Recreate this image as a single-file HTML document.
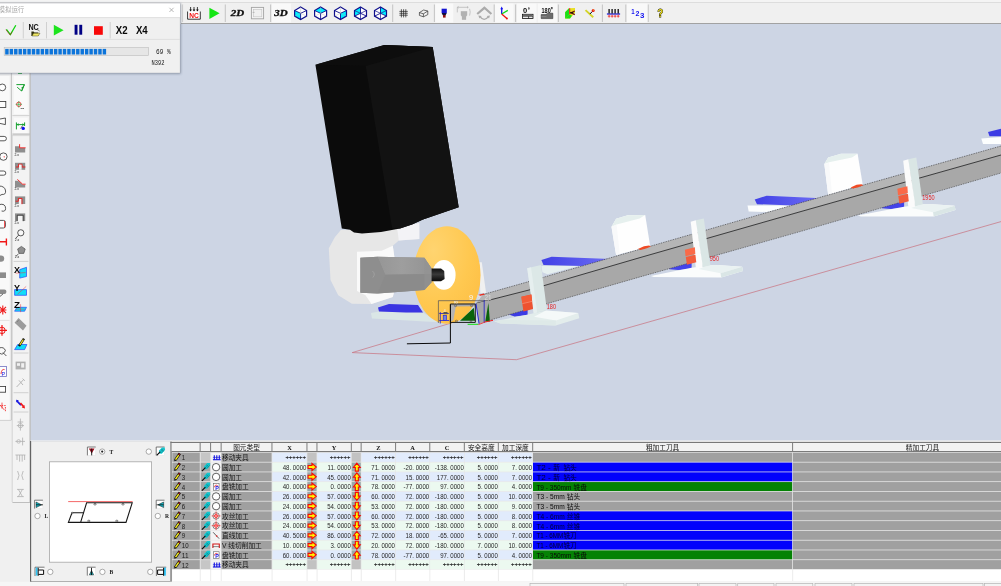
<!DOCTYPE html>
<html lang="zh"><head><meta charset="utf-8"><title>模拟运行</title>
<style>html,body{margin:0;padding:0;background:#F0F0F0;overflow:hidden}svg{display:block;will-change:transform}text{white-space:pre}</style></head>
<body><svg width="1001" height="586" viewBox="0 0 1001 586">
<defs>
<linearGradient id="gblue" x1="0" y1="0" x2="1" y2="0"><stop offset="0" stop-color="#4040E6"/><stop offset="1" stop-color="#6E6EF4"/></linearGradient>
<radialGradient id="gdisc" cx="0.3" cy="0.25" r="0.9"><stop offset="0" stop-color="#FFD470"/><stop offset="0.6" stop-color="#FFC850"/><stop offset="1" stop-color="#FDBE44"/></radialGradient>
<linearGradient id="gcyl" x1="0" y1="0" x2="0" y2="1"><stop offset="0" stop-color="#101010"/><stop offset="0.45" stop-color="#3A3A3A"/><stop offset="1" stop-color="#0A0A0A"/></linearGradient>
<linearGradient id="gsp1" x1="0" y1="0" x2="1" y2="0"><stop offset="0" stop-color="#969696"/><stop offset="0.45" stop-color="#9E9E9E"/><stop offset="1" stop-color="#939393"/></linearGradient>
<filter id="fsh" x="-5%" y="-10%" width="110%" height="125%"><feGaussianBlur stdDeviation="1"/></filter>
</defs>
<rect x="30" y="24" width="971" height="417" fill="#CDD5E4"/>
<polyline points="452,322.8 352.2,352.6 516.5,359.7 1001,221.6" fill="none" stroke="#C8707C" stroke-width="0.7"/>
<polygon points="541.4,266 578.3,266 547.6,274.2 542.4,272.2" fill="#E6F0F0"/>
<polygon points="541.4,260 551.6,256.8 611,258.9 582.4,266 543.5,265" fill="url(#gblue)"/>
<polygon points="747.5,205.4 793,205.4 766.6,212 748.7,211.4" fill="#FCFEFE"/>
<polygon points="754.7,199.4 766.6,195.8 821.6,198.2 793,205.4 757,204.2" fill="url(#gblue)"/>
<polygon points="981.3,138.4 1001,137 1001,144 983,144" fill="#FCFEFE"/>
<polygon points="988,132 1001,128.7 1001,136.2 989.5,136.2" fill="#3C3CE4"/>
<polygon points="479.2,262.3 481.8,262.3 486.1,293 480.3,293" fill="#F0F0F0"/>
<polygon points="611.5,226.8 616.1,218.8 627.7,215.2 645.2,214.9 650.2,246.4 616.1,255.1" fill="#FEFEFE"/>
<polygon points="611.5,226.8 616.1,218.8 627.7,215.2 645.2,214.9 639.6,218.6 616.6,224.6" fill="#E6F0EE"/>
<polygon points="611.5,226.8 616.6,224.6 619.8,254.2 616.1,255.1" fill="#F8F9FA"/>
<polygon points="824.3,164 828.2,157.6 841,153.8 857.6,153.8 862.7,184.5 828.2,194.7" fill="#FEFEFE"/>
<polygon points="824.3,164 828.2,157.6 841,153.8 857.6,153.8 852,157.4 829,162.2" fill="#E6F0EE"/>
<polygon points="824.3,164 829,163 832,193.6 828.2,194.7" fill="#F8F9FA"/>
<polygon points="506,313.6 527.6,307.5 527.6,315.1 514.6,316.4" fill="#3C3CE4"/>
<polygon points="667.7,266.3 691.6,259.7 691.6,269 678.1,270.1 669.3,269.2" fill="#4444EA"/>
<polygon points="880.2,205.3 904.1,198.7 904.1,208 890.6,209.1 881.8,208.2" fill="#4444EA"/>
<polygon points="483,294.5 529,281.5 640,249.2 800,203 1001,146 1001,155 800,211.8 640,257.6 529,290 476,303.5" fill="#B5B5B5"/>
<polygon points="476,303.5 529,290 640,257.6 800,211.8 1001,155 1001,173 800,231.6 640,276.9 490.7,319.9 479,323.6" fill="#A8A8A8"/>
<polyline points="476,303.5 529,290 640,257.6 800,211.8 1001,155" fill="none" stroke="#1C1C1C" stroke-width="0.8"/>
<polyline points="483,294.5 529,281.5 640,249.2 800,203 1001,146" fill="none" stroke="#303030" stroke-width="0.7" stroke-dasharray="0.9 0.9"/>
<polyline points="490.7,319.9 640,276.9 800,231.6 1001,173" fill="none" stroke="#404040" stroke-width="0.7" stroke-dasharray="0.9 0.9"/>
<polygon points="637.9,248.9 644,246.2 649,245.5 651,246.5 646,248.6 640.6,250" fill="#F04A24"/>
<polygon points="850.6,187.4 856.6,184.8 861.4,184.2 863.2,185.2 858.4,187.2 853,188.6" fill="#F04A24"/>
<polygon points="478.4,294.8 483.7,293.4 485,294.4 479.5,296" fill="#E83020"/>
<polygon points="494.1,321.3 528,314.6 546,310.4 578.3,313 579.3,318.3 555.7,325.4 500.5,323.4" fill="#E3EDEC"/>
<polygon points="534,316.8 546,310.6 578.3,313 556,320.4" fill="#F5F9F9"/>
<polygon points="494.1,321.3 500.7,320 556,320.4 555.7,325.4 500.5,323.4" fill="#DEE9E8"/>
<polygon points="527.2,268.2 541,265.1 546.9,310 533.7,313.4" fill="#DCE8E7"/>
<polygon points="527.2,268.2 531,267.3 537.2,312.5 533.7,313.4" fill="#E6EFEF"/>
<polygon points="521.4,296.8 531.4,294.5 533,309.1 523.4,311.4" fill="#EE5230"/>
<polygon points="521.4,296.8 531.4,294.5 532.1,301.3 522.2,303.6" fill="#F45C38"/>
<polyline points="522.2,303.7 532.1,301.4" fill="none" stroke="#F6A088" stroke-width="0.6"/>
<text x="546.7" y="308.5" font-family="'Liberation Sans','Noto Sans CJK SC',sans-serif" font-size="6.4" fill="#E42424" textLength="9.3" lengthAdjust="spacingAndGlyphs">180</text>
<polygon points="650.8,276.1 691.4,267.7 710.3,265.2 720.5,265.2 742.2,266.7 743,271 721.2,277.6 653.7,277.1" fill="#FAFCFC"/>
<polygon points="698.7,269.1 710.3,265 720.5,265.2 742.2,266.7 720.5,273.2" fill="#EAF2F2"/>
<polygon points="720.5,273.2 742.2,266.7 743,271 721.2,277.6" fill="#DAE6E6"/>
<polygon points="695.8,220.2 703.8,218.4 710.3,265.2 702.3,267.6" fill="#DAE6E5"/>
<polygon points="690.7,221.7 695.8,220.2 702.3,263 702.3,267.6 701,268 695.8,267.4" fill="#FBFBFB"/>
<polygon points="684.9,249.7 694.9,247.3 695.3,253.9 685.5,256.2" fill="#FA6A48"/>
<polygon points="685.8,256.9 695.4,254.7 696.3,262.3 686.9,264.7" fill="#F25C3C"/>
<text x="709.7" y="261.3" font-family="'Liberation Sans','Noto Sans CJK SC',sans-serif" font-size="6.4" fill="#E42424" textLength="9.3" lengthAdjust="spacingAndGlyphs">950</text>
<polygon points="857.9,215.4 903.9,206.7 922.8,204.2 933,204.2 954.7,205.7 955.5,210 933.7,216.6 860.8,216.4" fill="#FAFCFC"/>
<polygon points="911.2,208.1 922.8,204 933,204.2 954.7,205.7 933,212.2" fill="#EAF2F2"/>
<polygon points="933,212.2 954.7,205.7 955.5,210 933.7,216.6" fill="#DAE6E6"/>
<polygon points="908.3,159.2 916.3,157.4 922.8,204.2 914.8,206.6" fill="#DAE6E5"/>
<polygon points="903.2,160.7 908.3,159.2 914.8,202 914.8,206.6 913.5,207 908.3,206.4" fill="#FBFBFB"/>
<polygon points="897.4,188.7 907.4,186.3 907.8,192.9 898,195.2" fill="#FA6A48"/>
<polygon points="898.3,195.9 907.9,193.7 908.8,201.3 899.4,203.7" fill="#F25C3C"/>
<text x="922.2" y="200.3" font-family="'Liberation Sans','Noto Sans CJK SC',sans-serif" font-size="6.4" fill="#E42424" textLength="12.4" lengthAdjust="spacingAndGlyphs">1950</text>
<polygon points="371,313 379,311.5 406,312.5 423,312.5 438,322 425,321.5 372,318.5" fill="#DAE6E6"/>
<polygon points="378,307.5 389,304 418,305 423,312.5 406,312.5 379,311.5" fill="#3A34E2"/>
<polygon points="328.8,248.3 334.8,237.2 340.8,230 397.1,228 419.3,223 419.3,238.9 398.8,240.6 392.8,245.7 394.5,257.7 393.7,293.5 392.8,296.9 371.5,304.1 351.9,303.8 338.2,295.2 330.5,279.9" fill="#E7E7E7"/>
<polygon points="357,251.7 381.7,250.8 392.8,245.7 394.5,257.7 393.7,293.5 392.8,296.9 371.5,304.1 365.5,295.2 357,291" fill="#FAFAFA"/>
<polygon points="397.1,228 419.3,223 419.3,238.9 398.8,240.6" fill="#F3F3F6"/>
<polygon points="315.4,64.8 384.3,45.1 432.7,46.9 458.7,207.3 423,219.6 412,224.6 400,228.6 381,232 362,233.5 354,232.5 350,229.7 341.8,228.6" fill="#0B0B0B"/>
<polygon points="365.6,65.9 384.3,45.1 432.7,46.9 458.7,207.3 423,219.6 412,224.6 400,228.6 392,227.8" fill="#121212"/>
<polygon points="315.4,64.8 384.3,45.1 432.7,46.9 365.6,65.9" fill="#0D0D0D"/>
<ellipse cx="447" cy="275" rx="33.6" ry="48.8" fill="url(#gdisc)"/>
<ellipse cx="443.9" cy="274.9" rx="11.7" ry="14.9" fill="#FFFFFF"/>
<polygon points="430,268.6 441,268.6 444.2,271 444.6,279 441,281.2 430,281.2" fill="url(#gcyl)"/>
<polygon points="360.4,257.7 377.5,256.8 424.4,257.7 431.3,268 431.3,282.4 424.4,290.1 377.5,293.5 360.4,292.7" fill="#8E8E8E"/>
<polygon points="377.5,256.8 424.4,257.7 431.3,268 431.3,274 385.2,274.7" fill="url(#gsp1)"/>
<polygon points="385.2,274.7 431.3,274 431.3,282.4 424.4,290.1 377.5,293.5" fill="#8B8B8B"/>
<polygon points="424.4,257.7 431.3,268 431.3,282.4 424.4,290.1" fill="#929292" opacity="0.6"/>
<polygon points="360.4,257.7 377.5,256.8 385.2,274.7 377.5,293.5 360.4,292.7" fill="#8E8E8E"/>
<path d="M372.4,271 Q376,274 372.8,277.6" fill="none" stroke="#A6A6A6" stroke-width="0.7"/>
<polygon points="450.4,304 476,303.5 476.3,306.2 450.4,306.4" fill="#A8A8A8"/>
<polygon points="476,303.5 489,300 490.7,319.9 479,323.6" fill="#A8A8A8"/>
<polygon points="460,320.7 473.8,307.7 475.3,320.7" fill="#0A640A"/>
<polygon points="485.3,321.5 488.4,303 489.9,321.5" fill="#0A640A"/>
<polyline points="438.4,323 438.4,300.7 485.3,300.7" fill="none" stroke="#505058" stroke-width="0.7"/>
<polygon points="450.4,304 475.3,304 475.3,322.4 450.4,322.4" fill="none" stroke="#1A1A1A" stroke-width="1"/>
<polygon points="451,305.5 456,305.5 453.4,320 451,321.4" fill="#B4B4B4"/>
<polyline points="476,303.8 479.1,323.8" fill="none" stroke="#1818E0" stroke-width="0.9"/>
<line x1="484.2" y1="300" x2="484.2" y2="323" stroke="#1818C8" stroke-width="0.8"/>
<polyline points="439.2,313.5 448.8,313.5" fill="none" stroke="#2020D0" stroke-width="0.8"/>
<polyline points="439.2,320.5 449.2,320.5" fill="none" stroke="#2020D0" stroke-width="0.8"/>
<rect x="443.2" y="315.3" width="3.4" height="5" fill="#7080E0" stroke="#2020D0" stroke-width="0.6"/>
<line x1="440.3" y1="312" x2="440.3" y2="323.5" stroke="#2020D0" stroke-width="0.8"/>
<polygon points="443.5,312 447.5,312 447.5,314.2 443.5,314.2" fill="#555"/>
<line x1="467.6" y1="324.3" x2="478.4" y2="324.3" stroke="#10E010" stroke-width="1"/>
<polyline points="483.7,322.3 493,320.3" fill="none" stroke="#F02020" stroke-width="1"/>
<polyline points="478.4,324.6 483.7,322.6" fill="none" stroke="#F03030" stroke-width="0.9"/>
<ellipse cx="455.5" cy="305.8" rx="1.2" ry="0.8" fill="none" stroke="#444" stroke-width="0.5"/>
<ellipse cx="471.6" cy="305.8" rx="1.2" ry="0.8" fill="none" stroke="#444" stroke-width="0.5"/>
<ellipse cx="456.5" cy="321" rx="1.2" ry="0.8" fill="none" stroke="#444" stroke-width="0.5"/>
<ellipse cx="471" cy="321" rx="1.2" ry="0.8" fill="none" stroke="#444" stroke-width="0.5"/>
<text x="468.9" y="300" font-family="'Liberation Sans','Noto Sans CJK SC',sans-serif" font-size="7.4" fill="#F6F6F6">9</text>
<text x="454" y="303" font-family="'Liberation Sans','Noto Sans CJK SC',sans-serif" font-size="4.6" fill="#EEEEEE" transform="rotate(-90 456 301.5)">8</text>
<text x="477.2" y="299.4" font-family="'Liberation Sans','Noto Sans CJK SC',sans-serif" font-size="5" fill="#E8E8E8">8</text>
<text x="484.5" y="299.5" font-family="'Liberation Sans','Noto Sans CJK SC',sans-serif" font-size="6.4" fill="#DCDCDC">21</text>
<text x="443.4" y="311.6" font-family="'Liberation Sans','Noto Sans CJK SC',sans-serif" font-size="4" fill="#F0F0F0">4</text>
<polyline points="406.9,343.8 450.4,343 450.4,304.6" fill="none" stroke="#0A0A0A" stroke-width="1"/>
<rect x="0" y="0" width="1001" height="3" fill="#F4F4F4"/>
<rect x="0" y="2.2" width="1001" height="0.8" fill="#D8D8D8"/>
<rect x="181" y="3" width="820" height="20.2" fill="#F0F0F0"/>
<rect x="181" y="23" width="820" height="1" fill="#A2A2A2"/>
<line x1="182.6" y1="4.5" x2="182.6" y2="22" stroke="#C4C4C4" stroke-width="0.8"/>
<line x1="225.3" y1="4.5" x2="225.3" y2="22" stroke="#C0C0C0" stroke-width="0.9"/>
<line x1="270.6" y1="4.5" x2="270.6" y2="22" stroke="#C0C0C0" stroke-width="0.9"/>
<line x1="392.7" y1="4.5" x2="392.7" y2="22" stroke="#C0C0C0" stroke-width="0.9"/>
<line x1="434.4" y1="4.5" x2="434.4" y2="22" stroke="#C0C0C0" stroke-width="0.9"/>
<line x1="494.2" y1="4.5" x2="494.2" y2="22" stroke="#C0C0C0" stroke-width="0.9"/>
<line x1="515.6" y1="4.5" x2="515.6" y2="22" stroke="#C0C0C0" stroke-width="0.9"/>
<line x1="558.4" y1="4.5" x2="558.4" y2="22" stroke="#C0C0C0" stroke-width="0.9"/>
<line x1="602.4" y1="4.5" x2="602.4" y2="22" stroke="#C0C0C0" stroke-width="0.9"/>
<line x1="625.8" y1="4.5" x2="625.8" y2="22" stroke="#C0C0C0" stroke-width="0.9"/>
<line x1="648.2" y1="4.5" x2="648.2" y2="22" stroke="#C0C0C0" stroke-width="0.9"/>
<rect x="272" y="3.6" width="19" height="19" fill="#F9F9F9"/>
<rect x="435.2" y="3.6" width="18" height="19" fill="#F9F9F9"/>
<rect x="495" y="3.6" width="18.6" height="19" fill="#F9F9F9"/>
<rect x="517" y="3.6" width="19.6" height="19" fill="#F9F9F9"/>
<rect x="537.8" y="3.6" width="19.2" height="19" fill="#F9F9F9"/>
<rect x="627" y="3.6" width="20.4" height="19" fill="#F9F9F9"/>
<rect x="187.6" y="11.3" width="12.6" height="7.6" fill="#FFFFFF"/>
<polyline points="187.6,11.5 187.6,19.2 200.3,19.2 200.3,11.5" fill="none" stroke="#202020" stroke-width="0.9"/>
<text x="193.9" y="18.2" font-family="'Liberation Sans','Noto Sans CJK SC',sans-serif" font-size="6.6" fill="#F01010" text-anchor="middle" font-weight="bold">NC</text>
<line x1="190.6" y1="7" x2="190.6" y2="10.6" stroke="#101010" stroke-width="0.8"/>
<polygon points="189.3,9.6 191.9,9.6 190.6,11.6" fill="#101010"/>
<line x1="194" y1="7" x2="194" y2="10.6" stroke="#101010" stroke-width="0.8"/>
<polygon points="192.7,9.6 195.3,9.6 194,11.6" fill="#101010"/>
<line x1="197.4" y1="7" x2="197.4" y2="10.6" stroke="#101010" stroke-width="0.8"/>
<polygon points="196.1,9.6 198.7,9.6 197.4,11.6" fill="#101010"/>
<polygon points="209.4,7.8 219.6,13.3 209.4,18.9" fill="#14E614"/>
<text x="237.5" y="16.4" font-family="'Liberation Serif','Noto Serif CJK SC',serif" font-size="8.6" fill="#101010" text-anchor="middle" font-weight="bold" font-style="italic" textLength="13.4" lengthAdjust="spacingAndGlyphs" stroke="#101010" stroke-width="0.3">2D</text>
<rect x="251.4" y="7.4" width="12.2" height="11.4" fill="#F4F4F4" stroke="#A4A4A4" stroke-width="0.9"/>
<rect x="253.4" y="9.4" width="8.4" height="7.4" fill="#F0F0F0" stroke="#C2C2C2" stroke-width="0.6"/>
<line x1="252.6" y1="12.4" x2="254.6" y2="12.4" stroke="#A0A0A0" stroke-width="0.6"/>
<text x="281" y="16.4" font-family="'Liberation Serif','Noto Serif CJK SC',serif" font-size="8.6" fill="#101010" text-anchor="middle" font-weight="bold" font-style="italic" textLength="13.4" lengthAdjust="spacingAndGlyphs" stroke="#101010" stroke-width="0.3">3D</text>
<polygon points="300.6,7 306.6,10.5 306.6,16.1 300.6,19.6 294.6,16.1 294.6,10.5" fill="#FFFFFF"/>
<polygon points="294.6,10.5 300.6,13.3 300.6,19.6 294.6,16.1" fill="#00F0FF"/>
<polygon points="300.6,7 306.6,10.5 306.6,16.1 300.6,19.6 294.6,16.1 294.6,10.5" fill="none" stroke="#10108C" stroke-width="1.2"/>
<polyline points="294.6,10.5 300.6,13.3 306.6,10.5" fill="none" stroke="#10108C" stroke-width="0.9"/>
<line x1="300.6" y1="13.3" x2="300.6" y2="19.6" stroke="#10108C" stroke-width="0.9"/>
<polyline points="294.6,16.1 300.6,13.3 306.6,16.1" fill="none" stroke="#B0B0B0" stroke-width="0.4"/>
<line x1="300.6" y1="13.3" x2="300.6" y2="7" stroke="#B0B0B0" stroke-width="0.4"/>
<polygon points="320.6,7 326.6,10.5 326.6,16.1 320.6,19.6 314.6,16.1 314.6,10.5" fill="#FFFFFF"/>
<polygon points="320.6,7 326.6,10.5 320.6,13.3 314.6,10.5" fill="#00F0FF"/>
<polygon points="320.6,7 326.6,10.5 326.6,16.1 320.6,19.6 314.6,16.1 314.6,10.5" fill="none" stroke="#10108C" stroke-width="1.2"/>
<polyline points="314.6,10.5 320.6,13.3 326.6,10.5" fill="none" stroke="#10108C" stroke-width="0.9"/>
<line x1="320.6" y1="13.3" x2="320.6" y2="19.6" stroke="#10108C" stroke-width="0.9"/>
<polyline points="314.6,16.1 320.6,13.3 326.6,16.1" fill="none" stroke="#B0B0B0" stroke-width="0.4"/>
<line x1="320.6" y1="13.3" x2="320.6" y2="7" stroke="#B0B0B0" stroke-width="0.4"/>
<polygon points="340.5,7 346.5,10.5 346.5,16.1 340.5,19.6 334.5,16.1 334.5,10.5" fill="#FFFFFF"/>
<polygon points="340.5,13.3 346.5,10.5 346.5,16.1 340.5,19.6" fill="#00F0FF"/>
<polygon points="340.5,7 346.5,10.5 346.5,16.1 340.5,19.6 334.5,16.1 334.5,10.5" fill="none" stroke="#10108C" stroke-width="1.2"/>
<polyline points="334.5,10.5 340.5,13.3 346.5,10.5" fill="none" stroke="#10108C" stroke-width="0.9"/>
<line x1="340.5" y1="13.3" x2="340.5" y2="19.6" stroke="#10108C" stroke-width="0.9"/>
<polyline points="334.5,16.1 340.5,13.3 346.5,16.1" fill="none" stroke="#B0B0B0" stroke-width="0.4"/>
<line x1="340.5" y1="13.3" x2="340.5" y2="7" stroke="#B0B0B0" stroke-width="0.4"/>
<polygon points="360.5,7 366.5,10.5 366.5,16.1 360.5,19.6 354.5,16.1 354.5,10.5" fill="#FFFFFF"/>
<polygon points="354.5,10.5 360.5,13.3 354.5,16.1" fill="#00F0FF"/>
<polygon points="354.5,10.5 360.5,7 360.5,13.3" fill="#00F0FF"/>
<polygon points="360.5,7 366.5,10.5 366.5,16.1 360.5,19.6 354.5,16.1 354.5,10.5" fill="none" stroke="#10108C" stroke-width="1.2"/>
<polyline points="354.5,16.1 360.5,13.3 366.5,16.1" fill="none" stroke="#10108C" stroke-width="0.9"/>
<line x1="360.5" y1="13.3" x2="360.5" y2="7" stroke="#10108C" stroke-width="0.9"/>
<polyline points="354.5,10.5 360.5,13.3 366.5,10.5" fill="none" stroke="#10108C" stroke-width="0.7"/>
<line x1="360.5" y1="13.3" x2="360.5" y2="19.6" stroke="#10108C" stroke-width="0.7"/>
<polygon points="380.5,7 386.5,10.5 386.5,16.1 380.5,19.6 374.5,16.1 374.5,10.5" fill="#FFFFFF"/>
<polygon points="386.5,10.5 380.5,13.3 386.5,16.1" fill="#00F0FF"/>
<polygon points="380.5,7 386.5,10.5 380.5,13.3" fill="#00F0FF"/>
<polygon points="380.5,7 386.5,10.5 386.5,16.1 380.5,19.6 374.5,16.1 374.5,10.5" fill="none" stroke="#10108C" stroke-width="1.2"/>
<polyline points="374.5,16.1 380.5,13.3 386.5,16.1" fill="none" stroke="#10108C" stroke-width="0.9"/>
<line x1="380.5" y1="13.3" x2="380.5" y2="7" stroke="#10108C" stroke-width="0.9"/>
<polyline points="374.5,10.5 380.5,13.3 386.5,10.5" fill="none" stroke="#10108C" stroke-width="0.7"/>
<line x1="380.5" y1="13.3" x2="380.5" y2="19.6" stroke="#10108C" stroke-width="0.7"/>
<line x1="401.4" y1="9.2" x2="401.4" y2="17.4" stroke="#202020" stroke-width="0.7"/>
<line x1="403.6" y1="9.2" x2="403.6" y2="17.4" stroke="#202020" stroke-width="0.7"/>
<line x1="405.8" y1="9.2" x2="405.8" y2="17.4" stroke="#202020" stroke-width="0.7"/>
<line x1="399.4" y1="11.4" x2="407.8" y2="11.4" stroke="#202020" stroke-width="0.7"/>
<line x1="399.4" y1="13.3" x2="407.8" y2="13.3" stroke="#202020" stroke-width="0.7"/>
<line x1="399.4" y1="15.2" x2="407.8" y2="15.2" stroke="#202020" stroke-width="0.7"/>
<path d="M419.4,12.6 L423.6,10 L427.8,11 L427.8,14.6 L423.4,16.8 L419.4,15.4 Z M419.4,12.6 L423.4,13.8 L427.8,11 M423.4,13.8 L423.4,16.8" fill="none" stroke="#303030" stroke-width="0.7"/>
<rect x="441.6" y="8.7" width="5.2" height="4.3" fill="#1414D0"/>
<polygon points="441.6,13 446.8,13 445.6,15.2 442.8,15.2" fill="#101040"/>
<rect x="443" y="15" width="2.6" height="2.6" fill="#8C1010"/>
<rect x="460.8" y="11.2" width="6.4" height="4" fill="#B2B2B2"/>
<polygon points="460.8,15 467.2,15 466.2,16.4 461.8,16.4" fill="#B2B2B2"/>
<rect x="461.9" y="16" width="4.2" height="3.8" fill="#B2B2B2"/>
<line x1="457.4" y1="7.3" x2="468.2" y2="7.3" stroke="#B2B2B2" stroke-width="0.7"/>
<path d="M457.3,7.4 L457.3,12.4 M458.6,6.4 L457.4,7.3 L458.6,8.2 M467,6.4 L468.2,7.3 L467,8.2 M469.6,8.8 Q470.8,12 469.6,15.6" fill="none" stroke="#B2B2B2" stroke-width="0.7"/>
<path d="M477.2,14 L484.4,7.8 L491.4,14" fill="none" stroke="#ABABAB" stroke-width="2.2" stroke-linejoin="miter"/>
<path d="M479.8,16.4 Q484.2,22.4 488.6,16.4" fill="none" stroke="#ABABAB" stroke-width="1.3"/>
<polygon points="478.4,15.6 481.6,16 479.4,18.4" fill="#ABABAB"/>
<polygon points="490,15.6 486.8,16 489,18.4" fill="#ABABAB"/>
<line x1="501.7" y1="14" x2="501.7" y2="8" stroke="#1010F0" stroke-width="1.3"/>
<polygon points="500.3,9.2 503.1,9.2 501.7,6.6" fill="#1010F0"/>
<line x1="501.7" y1="14" x2="507.8" y2="10.4" stroke="#10D818" stroke-width="1.3"/>
<line x1="501.7" y1="14" x2="506.6" y2="18.2" stroke="#F01010" stroke-width="1.3"/>
<circle cx="506.9" cy="18.6" r="1" fill="#F01010"/>
<text x="523" y="13" font-family="'Liberation Sans','Noto Sans CJK SC',sans-serif" font-size="7.6" fill="#0A0A0A" font-weight="bold" textLength="4.2" lengthAdjust="spacingAndGlyphs">0</text>
<rect x="528.4" y="7.8" width="1.3" height="1.3" fill="none" stroke="#202020" stroke-width="0.5"/>
<rect x="522.5" y="14.3" width="10.5" height="4.2" fill="#E8E8E8" stroke="#101010" stroke-width="0.8"/>
<rect x="522.9" y="14.7" width="9.7" height="1.5" fill="#6E6E6E"/>
<line x1="528.6" y1="16.2" x2="528.6" y2="18.4" stroke="#101010" stroke-width="0.7"/>
<line x1="522.6" y1="16.4" x2="533" y2="16.4" stroke="#101010" stroke-width="0.5"/>
<text x="541.5" y="12.6" font-family="'Liberation Sans','Noto Sans CJK SC',sans-serif" font-size="7.2" fill="#0A0A0A" font-weight="bold" textLength="9.2" lengthAdjust="spacingAndGlyphs">180</text>
<rect x="551.2" y="7.6" width="1.3" height="1.3" fill="none" stroke="#202020" stroke-width="0.5"/>
<polygon points="541.2,14.6 546,14.6 547.6,13.2 552.8,13.2 552.8,18.6 541.2,18.6" fill="#6C6C6C" stroke="#303030" stroke-width="0.6"/>
<line x1="541.4" y1="16.6" x2="546.4" y2="16.6" stroke="#A0A0A0" stroke-width="0.5"/>
<polygon points="565.1,12.3 569,8.3 575,8 575,13 570,18.4 565.1,18.4" fill="#E8E020"/>
<polygon points="565.1,12.3 569,8.3 569.2,14.6 565.1,18.4" fill="#18E018"/>
<polygon points="565.1,18.4 569.2,14.6 572,15.4 570,18.4" fill="#18E018"/>
<polygon points="569,8.3 570.2,8.2 570.4,14.2 569.2,14.6" fill="#E83030"/>
<path d="M574.8,11 L571,12.8 L574.8,14.6" fill="none" stroke="#701010" stroke-width="1.2"/>
<line x1="570.2" y1="12.8" x2="573.4" y2="12.8" stroke="#0A0A0A" stroke-width="1"/>
<line x1="585.5" y1="10.1" x2="593.2" y2="17.3" stroke="#D4D428" stroke-width="1.9"/>
<line x1="589.9" y1="14" x2="592.6" y2="11.2" stroke="#0A0A0A" stroke-width="1"/>
<circle cx="593.2" cy="10.4" r="1.5" fill="#E81818"/>
<circle cx="593.5" cy="10" r="0.6" fill="#F4E020"/>
<line x1="606.9" y1="14" x2="620.1" y2="14" stroke="#1010D8" stroke-width="1.2"/>
<line x1="609.1" y1="9" x2="609.1" y2="13.6" stroke="#0A0A0A" stroke-width="1.3"/>
<line x1="609.1" y1="14.8" x2="609.1" y2="17.6" stroke="#F02020" stroke-width="0.8"/>
<line x1="607.8" y1="16.2" x2="610.4" y2="16.2" stroke="#F02020" stroke-width="0.7"/>
<line x1="612.1" y1="9" x2="612.1" y2="13.6" stroke="#0A0A0A" stroke-width="1.3"/>
<line x1="612.1" y1="14.8" x2="612.1" y2="17.6" stroke="#F02020" stroke-width="0.8"/>
<line x1="610.8" y1="16.2" x2="613.4" y2="16.2" stroke="#F02020" stroke-width="0.7"/>
<line x1="615.1" y1="9" x2="615.1" y2="13.6" stroke="#0A0A0A" stroke-width="1.3"/>
<line x1="615.1" y1="14.8" x2="615.1" y2="17.6" stroke="#F02020" stroke-width="0.8"/>
<line x1="613.8" y1="16.2" x2="616.4" y2="16.2" stroke="#F02020" stroke-width="0.7"/>
<line x1="618.2" y1="9" x2="618.2" y2="13.6" stroke="#0A0A0A" stroke-width="1.3"/>
<line x1="618.2" y1="14.8" x2="618.2" y2="17.6" stroke="#F02020" stroke-width="0.8"/>
<line x1="616.9" y1="16.2" x2="619.5" y2="16.2" stroke="#F02020" stroke-width="0.7"/>
<text x="631.2" y="14" font-family="'Liberation Sans','Noto Sans CJK SC',sans-serif" font-size="7" fill="#1414F0" font-weight="bold" textLength="3.4" lengthAdjust="spacingAndGlyphs">1</text>
<text x="635.4" y="16.2" font-family="'Liberation Sans','Noto Sans CJK SC',sans-serif" font-size="7" fill="#1414F0" font-weight="bold" textLength="3.9" lengthAdjust="spacingAndGlyphs">2</text>
<text x="639.9" y="18.4" font-family="'Liberation Sans','Noto Sans CJK SC',sans-serif" font-size="7.6" fill="#1414F0" font-weight="bold" textLength="4.4" lengthAdjust="spacingAndGlyphs">3</text>
<text x="660.2" y="16.8" font-family="'Liberation Sans','Noto Sans CJK SC',sans-serif" font-size="10" fill="#EADC18" text-anchor="middle" font-weight="bold" stroke="#141400" stroke-width="0.9" paint-order="stroke" textLength="5.6" lengthAdjust="spacingAndGlyphs">?</text>
<rect x="0" y="73" width="30.6" height="368" fill="#F0F0F0"/>
<rect x="0" y="441" width="30.6" height="145" fill="#F0F0F0"/>
<rect x="0" y="76" width="9.6" height="344" fill="#F9F9F9"/>
<line x1="11.4" y1="73" x2="11.4" y2="420" stroke="#B8B8B8" stroke-width="0.8"/>
<rect x="12.4" y="73" width="17" height="60.4" fill="#F4F4F4"/>
<rect x="14" y="76" width="13.6" height="38" fill="#FAFAFA"/>
<rect x="14" y="118" width="13.6" height="15" fill="#FAFAFA"/>
<line x1="12.4" y1="115.6" x2="29.4" y2="115.6" stroke="#C8C8C8" stroke-width="0.8"/>
<rect x="12.4" y="133.6" width="17.4" height="1" fill="#B4B4B4"/>
<rect x="12.4" y="135.6" width="17" height="366.6" fill="#F3F3F3"/>
<line x1="12.4" y1="135.6" x2="29.6" y2="135.6" stroke="#D0D0D0" stroke-width="0.8"/>
<rect x="12.4" y="502" width="17.4" height="0.9" fill="#B8B8B8"/>
<rect x="29.6" y="73" width="1" height="429.8" fill="#ACACAC"/>
<line x1="12.2" y1="135" x2="12.2" y2="502" stroke="#C8C8C8" stroke-width="0.7"/>
<line x1="13.6" y1="353" x2="28.4" y2="353" stroke="#C6C6C6" stroke-width="0.8"/>
<line x1="13.6" y1="392.7" x2="28.4" y2="392.7" stroke="#C6C6C6" stroke-width="0.8"/>
<line x1="13.6" y1="412" x2="28.4" y2="412" stroke="#C6C6C6" stroke-width="0.8"/>
<line x1="18" y1="73.4" x2="22" y2="73.4" stroke="#18A030" stroke-width="1"/>
<path d="M16.4,84.6 L24.4,84.6 L21.6,91 L17.2,87.2 M21.6,91 L24.4,84.6" fill="none" stroke="#18A030" stroke-width="1"/>
<polygon points="21,88 23.2,86.2 22.8,89" fill="#18A030"/>
<circle cx="18.8" cy="104.3" r="2.2" fill="none" stroke="#F02020" stroke-width="0.8"/>
<line x1="15.6" y1="104.3" x2="22" y2="104.3" stroke="#18A030" stroke-width="0.6"/>
<line x1="18.8" y1="101" x2="18.8" y2="107.6" stroke="#18A030" stroke-width="0.6"/>
<text x="20.4" y="109.6" font-family="'Liberation Sans','Noto Sans CJK SC',sans-serif" font-size="3.4" fill="#202020">•••</text>
<path d="M16.4,122.4 L16.4,129.4 M24.6,122.4 L24.6,126 M16.4,124.6 L24.6,124.6" fill="none" stroke="#18A030" stroke-width="1"/>
<polygon points="16.6,124.6 18.6,123.2 18.6,126" fill="#18A030"/>
<polygon points="24.4,124.6 22.4,123.2 22.4,126" fill="#18A030"/>
<circle cx="23.2" cy="128.4" r="1.7" fill="#1010F0"/>
<path d="M20.6,128.6 L22.6,125.6" fill="none" stroke="#404040" stroke-width="0.8"/>
<polygon points="15,146.2 19.6,146.2 19.6,148 25.2,148 25.2,152.6 15,152.6" fill="#8E8E8E"/>
<polyline points="19.6,144.2 19.6,147.8 25.6,147.8" fill="none" stroke="#F01818" stroke-width="0.9"/>
<text x="14.4" y="156" font-family="'Liberation Sans','Noto Sans CJK SC',sans-serif" font-size="3.4" fill="#202020">2.x</text>
<rect x="15" y="162.8" width="10.2" height="7" fill="#8E8E8E"/>
<polyline points="16,167 18.6,167 18.6,164.2 22,164.2 22,167 25.4,167" fill="none" stroke="#F01818" stroke-width="0.9"/>
<rect x="19" y="164.6" width="2.6" height="5.2" fill="#F4F4F4"/>
<text x="14.4" y="173.2" font-family="'Liberation Sans','Noto Sans CJK SC',sans-serif" font-size="3.4" fill="#202020">2.x</text>
<polygon points="15,180.8 18,180.8 23,184.8 25.2,184.8 25.2,187.4 15,187.4" fill="#8E8E8E"/>
<polyline points="17.4,179.4 22.6,184.2 25.6,184.2" fill="none" stroke="#F01818" stroke-width="0.9"/>
<text x="14.4" y="190.2" font-family="'Liberation Sans','Noto Sans CJK SC',sans-serif" font-size="3.4" fill="#202020">2.x</text>
<rect x="15" y="196.4" width="10.2" height="7.6" fill="#8E8E8E"/>
<rect x="18.8" y="198.8" width="2.8" height="5.4" fill="#F4F4F4"/>
<polyline points="15.6,201.2 18.4,201.2 18.4,198.4 22,198.4 22,204.2" fill="none" stroke="#F01818" stroke-width="0.9"/>
<text x="14.4" y="207.2" font-family="'Liberation Sans','Noto Sans CJK SC',sans-serif" font-size="3.4" fill="#202020">2.x</text>
<rect x="15" y="213.4" width="10.2" height="7.6" fill="#8E8E8E"/>
<rect x="17.6" y="215.6" width="5.2" height="5.6" fill="#F4F4F4"/>
<polyline points="17.2,221.2 17.2,215.2 23.2,215.2 23.2,221.2" fill="none" stroke="#303030" stroke-width="0.8"/>
<text x="14.4" y="224.2" font-family="'Liberation Sans','Noto Sans CJK SC',sans-serif" font-size="3.4" fill="#202020">2.x</text>
<circle cx="20.8" cy="232.8" r="3.1" fill="#F8F8F8" stroke="#303030" stroke-width="0.8"/>
<line x1="15.6" y1="238.4" x2="18.6" y2="235.2" stroke="#303030" stroke-width="0.8"/>
<text x="14.8" y="240.6" font-family="'Liberation Sans','Noto Sans CJK SC',sans-serif" font-size="3.4" fill="#202020">2.x</text>
<polygon points="21.4,246.4 25.2,249 23.8,253.4 19,253.4 17.6,249" fill="#909090" stroke="#404040" stroke-width="0.6"/>
<line x1="16" y1="256.4" x2="18.6" y2="253.6" stroke="#303030" stroke-width="0.7"/>
<text x="14.8" y="258.4" font-family="'Liberation Sans','Noto Sans CJK SC',sans-serif" font-size="3.4" fill="#202020">2.x</text>
<line x1="13.6" y1="261.4" x2="28.4" y2="261.4" stroke="#C6C6C6" stroke-width="0.8"/>
<polygon points="19.7,269.6 26.5,267.3 26.5,276.5 19.7,278.1" fill="#10DCF8" stroke="#2848F8" stroke-width="0.7"/>
<line x1="15.6" y1="273.2" x2="25.6" y2="272.6" stroke="#F03030" stroke-width="0.5"/>
<text x="13.9" y="273.2" font-family="'Liberation Sans','Noto Sans CJK SC',sans-serif" font-size="9" fill="#060606" font-weight="bold" textLength="6" lengthAdjust="spacingAndGlyphs">X</text>
<polygon points="14.6,289.6 26.5,289.6 26.5,295.3 14.6,295.3" fill="#10DCF8" stroke="#2848F8" stroke-width="0.7"/>
<line x1="17.6" y1="294.2" x2="26.2" y2="286.4" stroke="#F03030" stroke-width="0.5"/>
<text x="13.9" y="290.6" font-family="'Liberation Sans','Noto Sans CJK SC',sans-serif" font-size="9" fill="#060606" font-weight="bold" textLength="6" lengthAdjust="spacingAndGlyphs">Y</text>
<polygon points="14.6,311.2 16.9,307.3 26.5,307.3 24.6,311.2" fill="#10DCF8" stroke="#2848F8" stroke-width="0.7"/>
<line x1="20.6" y1="304.2" x2="20.6" y2="312.2" stroke="#F03030" stroke-width="0.5"/>
<line x1="16" y1="309.2" x2="25" y2="309.2" stroke="#F03030" stroke-width="0.4"/>
<text x="13.9" y="308.2" font-family="'Liberation Sans','Noto Sans CJK SC',sans-serif" font-size="9" fill="#060606" font-weight="bold" textLength="6" lengthAdjust="spacingAndGlyphs">Z</text>
<polygon points="14.6,322.7 18.5,318 26.5,325.8 23,330.4" fill="#9C9C9C"/>
<line x1="18.6" y1="320.2" x2="17.2" y2="322" stroke="#707070" stroke-width="0.6"/>
<polygon points="14.6,349.6 17.7,344.5 26.9,344.5 24.6,349.6" fill="#10DCF8" stroke="#2848F8" stroke-width="0.7"/>
<line x1="19" y1="346.2" x2="24" y2="338.6" stroke="#101010" stroke-width="2.4"/>
<line x1="19.9" y1="344.9" x2="23.3" y2="339.7" stroke="#F0E020" stroke-width="1.2"/>
<rect x="15.6" y="361.6" width="10" height="7.8" fill="#B0B0B0"/>
<rect x="17" y="363.2" width="3" height="2.6" fill="#F0F0F0"/>
<rect x="21.2" y="363.2" width="3" height="4.4" fill="#F0F0F0"/>
<path d="M16.6,387 L23.6,379.6 M19,380.4 L23,385 M22.6,378.6 L24.8,380.8" fill="none" stroke="#B0B0B0" stroke-width="0.9"/>
<path d="M16.8,400.8 L21,405.2" fill="none" stroke="#1818E0" stroke-width="1.7"/>
<polygon points="16,399.8 18.8,400.2 16.6,402.4" fill="#1818E0"/>
<path d="M20.4,403 L23.6,406.6" fill="none" stroke="#F01818" stroke-width="1.7"/>
<polygon points="25,408.4 21.8,407.6 24.4,405" fill="#F01818"/>
<path d="M20.4,418.6 L20.4,430.6 M17.6,422 L23.2,422 M16.8,425.6 L24,425.6" fill="none" stroke="#B0B0B0" stroke-width="0.8"/>
<circle cx="20.4" cy="425.6" r="2.2" fill="none" stroke="#B0B0B0" stroke-width="0.7"/>
<path d="M15.4,441.4 L25,441.4 M22.6,437.6 L22.6,445.4" fill="none" stroke="#B0B0B0" stroke-width="0.8"/>
<circle cx="18.6" cy="441.4" r="1.8" fill="none" stroke="#B0B0B0" stroke-width="0.7"/>
<path d="M15.4,455 L25.4,455 M17,455 L17,460 M19.6,455 L19.6,461.6 M22.2,455 L22.2,461.6 M24.6,455 L24.6,460" fill="none" stroke="#B0B0B0" stroke-width="0.8"/>
<path d="M17.6,471 Q20.4,475.4 17.6,480 M23.2,471 Q20.4,475.4 23.2,480" fill="none" stroke="#B0B0B0" stroke-width="0.8"/>
<path d="M17,489.4 L23.8,489.4 M17,496.6 L23.8,496.6 M18.4,489.4 L22.4,496.6 M22.4,489.4 L18.4,496.6" fill="none" stroke="#B0B0B0" stroke-width="0.8"/>
<circle cx="2.3" cy="87.4" r="3.4" fill="#FDFDFD" stroke="#303030" stroke-width="0.8"/>
<rect x="-2" y="101.4" width="7.8" height="6" fill="#FDFDFD" stroke="#303030" stroke-width="0.8"/>
<polygon points="-2,119.4 5.4,118 5.4,124.6 -2,123" fill="#FDFDFD" stroke="#303030" stroke-width="0.8"/>
<rect x="-4" y="136.4" width="10.4" height="4.4" fill="#FDFDFD" stroke="#303030" stroke-width="0.8" rx="2.2"/>
<circle cx="3.4" cy="156.6" r="3.7" fill="#FDFDFD" stroke="#303030" stroke-width="0.8"/>
<circle cx="4.2" cy="156.8" r="0.6" fill="#F01818"/>
<rect x="-4" y="171" width="9.8" height="4.2" fill="#FDFDFD" stroke="#303030" stroke-width="0.8" rx="2.1"/>
<path d="M-1,186 Q5,186 5.6,191 Q5.8,195 2,194.4 L-1,196" fill="none" stroke="#303030" stroke-width="0.8"/>
<path d="M-1,204.6 Q5.6,203 5.6,208.6 Q5.4,212 1.6,211" fill="none" stroke="#303030" stroke-width="0.8"/>
<rect x="-3" y="220.4" width="8.4" height="7.6" fill="#FDFDFD" stroke="#303030" stroke-width="0.8" rx="2"/>
<line x1="4.6" y1="227.6" x2="4.6" y2="221" stroke="#F01818" stroke-width="0.8"/>
<path d="M-1,241.8 L6,241.8 M6.4,238.4 L6.4,245.6" fill="none" stroke="#F01818" stroke-width="1.4"/>
<circle cx="1" cy="258.6" r="3.2" fill="#8C8C8C"/>
<rect x="-2" y="272.4" width="8" height="5.6" fill="#8C8C8C"/>
<rect x="-3" y="289.6" width="9.4" height="4.4" fill="#8C8C8C" rx="2"/>
<line x1="0" y1="296.4" x2="3" y2="294" stroke="#303030" stroke-width="0.7"/>
<path d="M-1,310 L6.4,310 M2.8,305.4 L2.8,314.6 M-0.4,306.8 L6,313.2 M6,306.8 L-0.4,313.2" fill="none" stroke="#F01818" stroke-width="1.1"/>
<circle cx="2" cy="330.4" r="3.2" fill="none" stroke="#F01818" stroke-width="1"/>
<path d="M-3,330.4 L7,330.4 M2,325 L2,335.8" fill="none" stroke="#F01818" stroke-width="1.2"/>
<line x1="0" y1="320.4" x2="9.6" y2="320.4" stroke="#D8D8D8" stroke-width="0.7"/>
<path d="M-1,348 Q4,346.4 5.4,350.6 Q3,355.6 0,353.4 M3,352.6 L6.4,356" fill="none" stroke="#303030" stroke-width="0.8"/>
<rect x="-2" y="366.4" width="8.4" height="10" fill="#FDFDFD" stroke="#7070C0" stroke-width="0.8"/>
<path d="M1,374 Q1.4,368.6 4.6,369.6" fill="none" stroke="#F01818" stroke-width="0.8"/>
<text x="1.4" y="376" font-family="'Liberation Sans','Noto Sans CJK SC',sans-serif" font-size="5.4" fill="#1010E0">P</text>
<rect x="-3" y="386.4" width="8.6" height="5.8" fill="#FDFDFD" stroke="#303030" stroke-width="0.8"/>
<path d="M-1,405.6 L5.4,405.6 L5.4,411.4" fill="none" stroke="#F01818" stroke-width="0.8" stroke-dasharray="1.6 1"/>
<path d="M2,402.6 L2,408.6 M0,405 L4.4,410" fill="none" stroke="#F01818" stroke-width="0.7"/>
<line x1="0" y1="420.4" x2="11.4" y2="420.4" stroke="#C8C8C8" stroke-width="0.8"/>
<rect x="-3" y="3.4" width="183.8" height="70.4" fill="#5E687C" opacity="0.6" filter="url(#fsh)"/>
<rect x="-1" y="2.9" width="181.2" height="70.2" fill="#A4A8B0"/>
<rect x="0" y="3.4" width="179.9" height="69.4" fill="#F0F0F0"/>
<rect x="0" y="3.5" width="180" height="13.8" fill="#FFFFFF"/>
<text x="-1.4" y="12.2" font-family="'Liberation Sans','Noto Sans CJK SC',sans-serif" font-size="6.4" fill="#A6A6A6">模拟运行</text>
<path d="M169.4,7.8 L173.6,12 M173.6,7.8 L169.4,12" fill="none" stroke="#8C8C8C" stroke-width="0.6"/>
<line x1="0" y1="17.6" x2="180" y2="17.6" stroke="#DADADA" stroke-width="0.8"/>
<line x1="0" y1="39.4" x2="180" y2="39.4" stroke="#DADADA" stroke-width="0.8"/>
<line x1="23.3" y1="22" x2="23.3" y2="38.4" stroke="#C8C8C8" stroke-width="0.8"/>
<line x1="46.5" y1="22" x2="46.5" y2="38.4" stroke="#C8C8C8" stroke-width="0.8"/>
<line x1="110.2" y1="22" x2="110.2" y2="38.4" stroke="#C8C8C8" stroke-width="0.8"/>
<path d="M6.4,29.4 L10.4,34.6 L15.8,25.2" fill="none" stroke="#10D410" stroke-width="1.3"/>
<path d="M5.9,29.6 L10.1,35 L12,31.8" fill="none" stroke="#B01818" stroke-width="0.55"/>
<text x="33.6" y="30" font-family="'Liberation Sans','Noto Sans CJK SC',sans-serif" font-size="8.2" fill="#101010" text-anchor="middle" font-weight="bold" textLength="10.4" lengthAdjust="spacingAndGlyphs">NC</text>
<polygon points="31.4,31.4 33.6,31.4 34.4,32.4 38.2,32.4 38.2,36 31.4,36" fill="#303010"/>
<polygon points="32,36 33.6,33.2 40,33.2 38.2,36" fill="#F0E868" stroke="#303010" stroke-width="0.4"/>
<path d="M37,29.6 Q39,29.6 39.4,31.4" fill="none" stroke="#101010" stroke-width="0.5"/>
<polygon points="53.8,24.8 63.6,30.2 53.8,35.6" fill="#1EE41E"/>
<rect x="74.6" y="24.8" width="2.9" height="9.9" fill="#000084"/>
<rect x="79.3" y="24.8" width="2.9" height="9.9" fill="#000084"/>
<rect x="94" y="26.2" width="8.8" height="8.6" fill="#F80808"/>
<text x="121.7" y="34.4" font-family="'Liberation Sans','Noto Sans CJK SC',sans-serif" font-size="10.2" fill="#0A0A0A" text-anchor="middle" font-weight="bold" textLength="11.8" lengthAdjust="spacingAndGlyphs">X2</text>
<text x="141.8" y="34.4" font-family="'Liberation Sans','Noto Sans CJK SC',sans-serif" font-size="10.2" fill="#0A0A0A" text-anchor="middle" font-weight="bold" textLength="11.8" lengthAdjust="spacingAndGlyphs">X4</text>
<rect x="4.2" y="47.6" width="144.4" height="8" fill="#E6E6E6" stroke="#BCBCBC" stroke-width="0.6"/>
<rect x="5.2" y="48.9" width="3.45" height="5.6" fill="#0C74DA"/>
<rect x="9.63" y="48.9" width="3.45" height="5.6" fill="#0C74DA"/>
<rect x="14.06" y="48.9" width="3.45" height="5.6" fill="#0C74DA"/>
<rect x="18.49" y="48.9" width="3.45" height="5.6" fill="#0C74DA"/>
<rect x="22.92" y="48.9" width="3.45" height="5.6" fill="#0C74DA"/>
<rect x="27.35" y="48.9" width="3.45" height="5.6" fill="#0C74DA"/>
<rect x="31.78" y="48.9" width="3.45" height="5.6" fill="#0C74DA"/>
<rect x="36.21" y="48.9" width="3.45" height="5.6" fill="#0C74DA"/>
<rect x="40.64" y="48.9" width="3.45" height="5.6" fill="#0C74DA"/>
<rect x="45.07" y="48.9" width="3.45" height="5.6" fill="#0C74DA"/>
<rect x="49.5" y="48.9" width="3.45" height="5.6" fill="#0C74DA"/>
<rect x="53.93" y="48.9" width="3.45" height="5.6" fill="#0C74DA"/>
<rect x="58.36" y="48.9" width="3.45" height="5.6" fill="#0C74DA"/>
<rect x="62.79" y="48.9" width="3.45" height="5.6" fill="#0C74DA"/>
<rect x="67.22" y="48.9" width="3.45" height="5.6" fill="#0C74DA"/>
<rect x="71.65" y="48.9" width="3.45" height="5.6" fill="#0C74DA"/>
<rect x="76.08" y="48.9" width="3.45" height="5.6" fill="#0C74DA"/>
<rect x="80.51" y="48.9" width="3.45" height="5.6" fill="#0C74DA"/>
<rect x="84.94" y="48.9" width="3.45" height="5.6" fill="#0C74DA"/>
<rect x="89.37" y="48.9" width="3.45" height="5.6" fill="#0C74DA"/>
<rect x="93.8" y="48.9" width="3.45" height="5.6" fill="#0C74DA"/>
<rect x="98.23" y="48.9" width="3.45" height="5.6" fill="#0C74DA"/>
<rect x="102.66" y="48.9" width="3.45" height="5.6" fill="#0C74DA"/>
<text x="156" y="54" font-family="'Liberation Mono',monospace" font-size="6.8" fill="#181818" textLength="14.6" lengthAdjust="spacingAndGlyphs">69 %</text>
<text x="151.6" y="65.2" font-family="'Liberation Mono',monospace" font-size="6.8" fill="#181818" textLength="13" lengthAdjust="spacingAndGlyphs">N392</text>
<rect x="30.6" y="440.4" width="141" height="1.2" fill="#F0F0F0"/>
<rect x="30.4" y="441.2" width="141.4" height="140.6" fill="#8C8C8C"/>
<rect x="30.1" y="441" width="1.2" height="140.8" fill="#5C5C5C"/>
<rect x="31.2" y="441.2" width="139.4" height="139.8" fill="#F0F0F0"/>
<rect x="31.2" y="440.6" width="139.4" height="0.8" fill="#E6E9EE"/>
<rect x="49.4" y="461.8" width="102.2" height="100.4" fill="#FFFFFF" stroke="#A6A6A6" stroke-width="0.8"/>
<line x1="68.2" y1="501.6" x2="132.6" y2="501.6" stroke="#F04040" stroke-width="0.8"/>
<polygon points="86.6,502.8 132.2,502.8 126,522.4 80.6,522.4" fill="none" stroke="#161616" stroke-width="1.1"/>
<polyline points="80.6,522.4 68.4,522.4 72,512.8 83.4,512.8" fill="none" stroke="#161616" stroke-width="1.1"/>
<circle cx="72.2" cy="513" r="0.8" fill="#FFFFFF" stroke="#202020" stroke-width="0.5"/>
<ellipse cx="95" cy="504.2" rx="1.2" ry="0.8" fill="#FFFFFF" stroke="#2A2A2A" stroke-width="0.6"/>
<ellipse cx="123" cy="504.2" rx="1.2" ry="0.8" fill="#FFFFFF" stroke="#2A2A2A" stroke-width="0.6"/>
<ellipse cx="88.8" cy="521" rx="1.2" ry="0.8" fill="#FFFFFF" stroke="#2A2A2A" stroke-width="0.6"/>
<ellipse cx="116.8" cy="521" rx="1.2" ry="0.8" fill="#FFFFFF" stroke="#2A2A2A" stroke-width="0.6"/>
<rect x="87.4" y="447" width="8.3" height="8.4" fill="#FFFFFF" stroke="#E8E8E8" stroke-width="0.7"/>
<polyline points="87.4,455.4 87.4,447 95.7,447" fill="none" stroke="#5E5E5E" stroke-width="0.8"/>
<polygon points="88.8,448.4 94.6,448.4 91.7,453.4" fill="#A01020"/>
<line x1="91.7" y1="448.6" x2="91.7" y2="455.4" stroke="#101010" stroke-width="0.9"/>
<circle cx="102.2" cy="451.6" r="2.7" fill="#FFFFFF" stroke="#808080" stroke-width="0.65"/>
<circle cx="102.2" cy="451.6" r="1.1" fill="#202020"/>
<text x="109.4" y="454" font-family="'Liberation Serif','Noto Serif CJK SC',serif" font-size="5.6" fill="#202020" font-weight="bold">T</text>
<circle cx="148.8" cy="451.6" r="2.7" fill="#FFFFFF" stroke="#808080" stroke-width="0.65"/>
<rect x="156.2" y="447" width="8.3" height="8.4" fill="#FFFFFF" stroke="#E8E8E8" stroke-width="0.7"/>
<polyline points="156.2,455.4 156.2,447 164.5,447" fill="none" stroke="#5E5E5E" stroke-width="0.8"/>
<polygon points="159,450.5 162,447.4 164.9,447.4 164.9,449.9 161.8,453.7 159.2,453.5" fill="#14C8D0"/>
<path d="M160,452.3 l3.2,-3.4 M161.4,452.9 l3.2,-3.4 M161,449.1 l2.6,2.4" fill="none" stroke="#0A7880" stroke-width="0.45"/>
<line x1="156.7" y1="455.4" x2="160.2" y2="451.9" stroke="#0C0C0C" stroke-width="1.2"/>
<rect x="34.6" y="500.2" width="8.3" height="8.4" fill="#FFFFFF" stroke="#E8E8E8" stroke-width="0.7"/>
<polyline points="34.6,508.6 34.6,500.2 42.9,500.2" fill="none" stroke="#5E5E5E" stroke-width="0.8"/>
<polygon points="36,502 41.6,504.8 36,507.6" fill="#10B8C8" stroke="#101010" stroke-width="0.5"/>
<line x1="36" y1="504.8" x2="43" y2="504.8" stroke="#101010" stroke-width="0.8"/>
<circle cx="37.5" cy="516" r="2.7" fill="#FFFFFF" stroke="#808080" stroke-width="0.65"/>
<text x="44.4" y="518.4" font-family="'Liberation Serif','Noto Serif CJK SC',serif" font-size="5.6" fill="#202020" font-weight="bold">L</text>
<rect x="156.2" y="500.2" width="8.3" height="8.4" fill="#FFFFFF" stroke="#E8E8E8" stroke-width="0.7"/>
<polyline points="156.2,508.6 156.2,500.2 164.5,500.2" fill="none" stroke="#5E5E5E" stroke-width="0.8"/>
<polygon points="163.6,502 158,504.8 163.6,507.6" fill="#10B8C8" stroke="#101010" stroke-width="0.5"/>
<line x1="156.6" y1="504.8" x2="163.6" y2="504.8" stroke="#101010" stroke-width="0.8"/>
<circle cx="157.8" cy="516" r="2.7" fill="#FFFFFF" stroke="#808080" stroke-width="0.65"/>
<text x="165" y="518.4" font-family="'Liberation Serif','Noto Serif CJK SC',serif" font-size="5.6" fill="#202020" font-weight="bold">R</text>
<rect x="35" y="567.2" width="9.5" height="8.8" fill="#FDFDFD" stroke="#E8E8E8" stroke-width="0.7"/>
<polyline points="35,576 35,567.2 44.5,567.2" fill="none" stroke="#5E5E5E" stroke-width="0.8"/>
<rect x="35.8" y="567.6" width="1.8" height="8" fill="#30C4F4"/>
<path d="M38.4,570 L43.6,570 L43.6,574.4 L38.4,574.4 M38.2,567.8 L38.2,575.8" fill="none" stroke="#0C0C0C" stroke-width="1"/>
<circle cx="50.3" cy="571.9" r="2.7" fill="#FFFFFF" stroke="#808080" stroke-width="0.65"/>
<rect x="87.3" y="567.2" width="8.3" height="8.4" fill="#FFFFFF" stroke="#E8E8E8" stroke-width="0.7"/>
<polyline points="87.3,575.6 87.3,567.2 95.6,567.2" fill="none" stroke="#5E5E5E" stroke-width="0.8"/>
<polygon points="89.4,574.8 93.6,574.8 91.5,570.4" fill="#10B8C8" stroke="#101010" stroke-width="0.5"/>
<line x1="91.5" y1="567.8" x2="91.5" y2="575" stroke="#101010" stroke-width="0.9"/>
<circle cx="102.4" cy="571.9" r="2.7" fill="#FFFFFF" stroke="#808080" stroke-width="0.65"/>
<text x="109.4" y="574.3" font-family="'Liberation Serif','Noto Serif CJK SC',serif" font-size="5.6" fill="#202020" font-weight="bold">B</text>
<circle cx="150.3" cy="571.9" r="2.7" fill="#FFFFFF" stroke="#808080" stroke-width="0.65"/>
<rect x="156.4" y="567.2" width="9.8" height="8.8" fill="#FDFDFD" stroke="#E8E8E8" stroke-width="0.7"/>
<polyline points="156.4,576 156.4,567.2 166.2,567.2" fill="none" stroke="#5E5E5E" stroke-width="0.8"/>
<rect x="164" y="567.6" width="1.9" height="8" fill="#30C4F4"/>
<path d="M163.4,570 L157.6,570 L157.6,574.4 L163.4,574.4 M163.6,567.8 L163.6,575.8" fill="none" stroke="#0C0C0C" stroke-width="1"/>
<rect x="170.6" y="440.4" width="830.4" height="146" fill="#F0F0F0"/>
<rect x="172.2" y="442" width="829" height="139.4" fill="#FFFFFF"/>
<rect x="172.2" y="452.6" width="829" height="117" fill="#E9E9E9"/>
<rect x="170.5" y="441.6" width="1.2" height="140.2" fill="#727272"/>
<rect x="170.5" y="441.9" width="831" height="1.1" fill="#787878"/>
<rect x="171.7" y="443" width="830" height="8.2" fill="#F2F2F2"/>
<rect x="171.7" y="451.1" width="830" height="1.1" fill="#6C6C6C"/>
<rect x="199.6" y="443" width="1.1" height="8.2" fill="#868686"/>
<rect x="210" y="443" width="1.1" height="8.2" fill="#868686"/>
<rect x="220.6" y="443" width="1.1" height="8.2" fill="#868686"/>
<rect x="271.4" y="443" width="1.1" height="8.2" fill="#868686"/>
<rect x="306.4" y="443" width="1.1" height="8.2" fill="#868686"/>
<rect x="316.4" y="443" width="1.1" height="8.2" fill="#868686"/>
<rect x="350.8" y="443" width="1.1" height="8.2" fill="#868686"/>
<rect x="360.6" y="443" width="1.1" height="8.2" fill="#868686"/>
<rect x="395" y="443" width="1.1" height="8.2" fill="#868686"/>
<rect x="429.2" y="443" width="1.1" height="8.2" fill="#868686"/>
<rect x="463.8" y="443" width="1.1" height="8.2" fill="#868686"/>
<rect x="497.8" y="443" width="1.1" height="8.2" fill="#868686"/>
<rect x="532.1" y="443" width="1.1" height="8.2" fill="#868686"/>
<rect x="792" y="443" width="1.1" height="8.2" fill="#868686"/>
<text x="246.55" y="450.2" font-family="'Liberation Sans','Noto Sans CJK SC',sans-serif" font-size="6.7" fill="#101010" text-anchor="middle">图元类型</text>
<text x="289.5" y="450" font-family="'Liberation Serif','Noto Serif CJK SC',serif" font-size="6.4" fill="#101010" text-anchor="middle" font-weight="bold">X</text>
<text x="334.15" y="450" font-family="'Liberation Serif','Noto Serif CJK SC',serif" font-size="6.4" fill="#101010" text-anchor="middle" font-weight="bold">Y</text>
<text x="378.35" y="450" font-family="'Liberation Serif','Noto Serif CJK SC',serif" font-size="6.4" fill="#101010" text-anchor="middle" font-weight="bold">Z</text>
<text x="412.65" y="450" font-family="'Liberation Serif','Noto Serif CJK SC',serif" font-size="6.4" fill="#101010" text-anchor="middle" font-weight="bold">A</text>
<text x="447.05" y="450" font-family="'Liberation Serif','Noto Serif CJK SC',serif" font-size="6.4" fill="#101010" text-anchor="middle" font-weight="bold">C</text>
<text x="481.3" y="450.2" font-family="'Liberation Sans','Noto Sans CJK SC',sans-serif" font-size="6.7" fill="#101010" text-anchor="middle">安全高度</text>
<text x="515.45" y="450.2" font-family="'Liberation Sans','Noto Sans CJK SC',sans-serif" font-size="6.7" fill="#101010" text-anchor="middle">加工深度</text>
<text x="662.6" y="450.2" font-family="'Liberation Sans','Noto Sans CJK SC',sans-serif" font-size="6.7" fill="#101010" text-anchor="middle">粗加工刀具</text>
<text x="922.5" y="450.2" font-family="'Liberation Sans','Noto Sans CJK SC',sans-serif" font-size="6.7" fill="#101010" text-anchor="middle">精加工刀具</text>
<line x1="200.25" y1="452.6" x2="200.25" y2="581" stroke="#E4E4E4" stroke-width="0.7"/>
<line x1="210.65" y1="452.6" x2="210.65" y2="581" stroke="#E4E4E4" stroke-width="0.7"/>
<line x1="221.25" y1="452.6" x2="221.25" y2="581" stroke="#E4E4E4" stroke-width="0.7"/>
<line x1="272.05" y1="452.6" x2="272.05" y2="581" stroke="#E4E4E4" stroke-width="0.7"/>
<line x1="307.05" y1="452.6" x2="307.05" y2="581" stroke="#E4E4E4" stroke-width="0.7"/>
<line x1="317.05" y1="452.6" x2="317.05" y2="581" stroke="#E4E4E4" stroke-width="0.7"/>
<line x1="351.45" y1="452.6" x2="351.45" y2="581" stroke="#E4E4E4" stroke-width="0.7"/>
<line x1="361.25" y1="452.6" x2="361.25" y2="581" stroke="#E4E4E4" stroke-width="0.7"/>
<line x1="395.65" y1="452.6" x2="395.65" y2="581" stroke="#E4E4E4" stroke-width="0.7"/>
<line x1="429.85" y1="452.6" x2="429.85" y2="581" stroke="#E4E4E4" stroke-width="0.7"/>
<line x1="464.45" y1="452.6" x2="464.45" y2="581" stroke="#E4E4E4" stroke-width="0.7"/>
<line x1="498.45" y1="452.6" x2="498.45" y2="581" stroke="#E4E4E4" stroke-width="0.7"/>
<line x1="532.75" y1="452.6" x2="532.75" y2="581" stroke="#E4E4E4" stroke-width="0.7"/>
<line x1="792.65" y1="452.6" x2="792.65" y2="581" stroke="#E4E4E4" stroke-width="0.7"/>
<rect x="172.3" y="452.8" width="27.5" height="9" fill="#A0A0A0"/>
<rect x="200.7" y="452.8" width="9.5" height="9" fill="#C6C6C6"/>
<rect x="211.1" y="452.8" width="9.7" height="9" fill="#F4F4F4"/>
<rect x="221.5" y="452.8" width="50.1" height="9" fill="#A0A0A0"/>
<rect x="272.4" y="452.8" width="34.2" height="9" fill="#E1EBFC"/>
<rect x="317.3" y="452.8" width="33.7" height="9" fill="#E1EBFC"/>
<rect x="361.5" y="452.8" width="33.7" height="9" fill="#E1EBFC"/>
<rect x="395.9" y="452.8" width="33.5" height="9" fill="#E1EBFC"/>
<rect x="430.1" y="452.8" width="33.9" height="9" fill="#E1EBFC"/>
<rect x="464.6" y="452.8" width="33.4" height="9" fill="#E1EBFC"/>
<rect x="498.6" y="452.8" width="33.7" height="9" fill="#E1EBFC"/>
<rect x="307.3" y="452.8" width="9.3" height="9" fill="#C2C2C2"/>
<rect x="351.7" y="452.8" width="9.1" height="9" fill="#C2C2C2"/>
<rect x="533" y="452.8" width="259.2" height="9" fill="#A0A0A0"/>
<rect x="793" y="452.8" width="208" height="9" fill="#A0A0A0"/>
<polygon points="174.3,461.3 176.56,460.46 180.92,454.35 178.72,452.78 174.36,458.89" fill="#0C0C0C"/>
<polygon points="176.13,460.03 179.33,455.55 178.11,454.68 174.91,459.15" fill="#F6EC20"/>
<polygon points="179.54,455.33 180.3,454.28 178.99,453.35 178.24,454.4" fill="#A81818"/>
<text x="181.8" y="460.4" font-family="'Liberation Sans','Noto Sans CJK SC',sans-serif" font-size="6.9" fill="#1C1C1C" textLength="3.38" lengthAdjust="spacingAndGlyphs">1</text>
<line x1="212.9" y1="459.7" x2="220.7" y2="459.7" stroke="#1010E0" stroke-width="1.1"/>
<line x1="212.9" y1="457.4" x2="220.7" y2="457.4" stroke="#1010E0" stroke-width="0.6"/>
<line x1="214.3" y1="455.2" x2="214.3" y2="459.6" stroke="#1010E0" stroke-width="1.1"/>
<line x1="216.8" y1="455.2" x2="216.8" y2="459.6" stroke="#1010E0" stroke-width="1.1"/>
<line x1="219.3" y1="455.2" x2="219.3" y2="459.6" stroke="#1010E0" stroke-width="1.1"/>
<text x="222" y="460.1" font-family="'Liberation Sans','Noto Sans CJK SC',sans-serif" font-size="6.7" fill="#141414" xml:space="preserve">移动夹具</text>
<text x="306" y="459" font-family="'Liberation Sans','Noto Sans CJK SC',sans-serif" font-size="6" fill="#181818" text-anchor="end" textLength="20.6" lengthAdjust="spacingAndGlyphs" stroke="#181818" stroke-width="0.15">++++++</text>
<text x="350.4" y="459" font-family="'Liberation Sans','Noto Sans CJK SC',sans-serif" font-size="6" fill="#181818" text-anchor="end" textLength="20.6" lengthAdjust="spacingAndGlyphs" stroke="#181818" stroke-width="0.15">++++++</text>
<text x="394.6" y="459" font-family="'Liberation Sans','Noto Sans CJK SC',sans-serif" font-size="6" fill="#181818" text-anchor="end" textLength="20.6" lengthAdjust="spacingAndGlyphs" stroke="#181818" stroke-width="0.15">++++++</text>
<text x="428.8" y="459" font-family="'Liberation Sans','Noto Sans CJK SC',sans-serif" font-size="6" fill="#181818" text-anchor="end" textLength="20.6" lengthAdjust="spacingAndGlyphs" stroke="#181818" stroke-width="0.15">++++++</text>
<text x="463.4" y="459" font-family="'Liberation Sans','Noto Sans CJK SC',sans-serif" font-size="6" fill="#181818" text-anchor="end" textLength="20.6" lengthAdjust="spacingAndGlyphs" stroke="#181818" stroke-width="0.15">++++++</text>
<text x="497.4" y="459" font-family="'Liberation Sans','Noto Sans CJK SC',sans-serif" font-size="6" fill="#181818" text-anchor="end" textLength="20.6" lengthAdjust="spacingAndGlyphs" stroke="#181818" stroke-width="0.15">++++++</text>
<text x="531.7" y="459" font-family="'Liberation Sans','Noto Sans CJK SC',sans-serif" font-size="6" fill="#181818" text-anchor="end" textLength="20.6" lengthAdjust="spacingAndGlyphs" stroke="#181818" stroke-width="0.15">++++++</text>
<rect x="172.3" y="462.56" width="27.5" height="9" fill="#A0A0A0"/>
<rect x="200.7" y="462.56" width="9.5" height="9" fill="#A4A4A4"/>
<rect x="211.1" y="462.56" width="9.7" height="9" fill="#F4F4F4"/>
<rect x="221.5" y="462.56" width="50.1" height="9" fill="#A0A0A0"/>
<rect x="272.4" y="462.56" width="34.2" height="9" fill="#ECF9F0"/>
<rect x="317.3" y="462.56" width="33.7" height="9" fill="#ECF9F0"/>
<rect x="361.5" y="462.56" width="33.7" height="9" fill="#ECF9F0"/>
<rect x="395.9" y="462.56" width="33.5" height="9" fill="#ECF9F0"/>
<rect x="430.1" y="462.56" width="33.9" height="9" fill="#ECF9F0"/>
<rect x="464.6" y="462.56" width="33.4" height="9" fill="#ECF9F0"/>
<rect x="498.6" y="462.56" width="33.7" height="9" fill="#ECF9F0"/>
<rect x="307.3" y="462.56" width="9.3" height="9" fill="#98A8A8"/>
<rect x="351.7" y="462.56" width="9.1" height="9" fill="#98A8A8"/>
<rect x="533" y="462.56" width="259.2" height="9" fill="#0202FC"/>
<rect x="793" y="462.56" width="208" height="9" fill="#A0A0A0"/>
<polygon points="174.3,471.06 176.56,470.21 180.92,464.11 178.72,462.54 174.36,468.64" fill="#0C0C0C"/>
<polygon points="176.13,469.78 179.33,465.3 178.11,464.43 174.91,468.91" fill="#F6EC20"/>
<polygon points="179.54,465.09 180.3,464.03 178.99,463.1 178.24,464.16" fill="#A81818"/>
<text x="181.8" y="470.15" font-family="'Liberation Sans','Noto Sans CJK SC',sans-serif" font-size="6.9" fill="#1C1C1C" textLength="3.38" lengthAdjust="spacingAndGlyphs">2</text>
<polygon points="204.2,466.16 207.2,463.06 210.1,463.06 210.1,465.56 207,469.36 204.4,469.16" fill="#14C8D0"/>
<path d="M205.2,467.95 l3.2,-3.4 M206.6,468.56 l3.2,-3.4 M206.2,464.75 l2.6,2.4" fill="none" stroke="#0A7880" stroke-width="0.45"/>
<line x1="201.9" y1="471.06" x2="205.4" y2="467.56" stroke="#0C0C0C" stroke-width="1.2"/>
<circle cx="216.1" cy="467.16" r="3.7" fill="#FFFFFF" stroke="#202020" stroke-width="0.7"/>
<text x="222" y="469.86" font-family="'Liberation Sans','Noto Sans CJK SC',sans-serif" font-size="6.7" fill="#141414" xml:space="preserve">圆加工</text>
<text transform="translate(306.4,469.75) scale(0.881,1)" font-family="'Liberation Sans','Noto Sans CJK SC',sans-serif" font-size="6.9" fill="#262626" text-anchor="end">48.<tspan dx="1.92">0000</tspan></text>
<text transform="translate(350.8,469.75) scale(0.881,1)" font-family="'Liberation Sans','Noto Sans CJK SC',sans-serif" font-size="6.9" fill="#262626" text-anchor="end">11.<tspan dx="1.92">0000</tspan></text>
<text transform="translate(395,469.75) scale(0.881,1)" font-family="'Liberation Sans','Noto Sans CJK SC',sans-serif" font-size="6.9" fill="#262626" text-anchor="end">71.<tspan dx="1.92">0000</tspan></text>
<text transform="translate(429.2,469.75) scale(0.881,1)" font-family="'Liberation Sans','Noto Sans CJK SC',sans-serif" font-size="6.9" fill="#262626" text-anchor="end">-20.<tspan dx="1.92">0000</tspan></text>
<text transform="translate(463.8,469.75) scale(0.881,1)" font-family="'Liberation Sans','Noto Sans CJK SC',sans-serif" font-size="6.9" fill="#262626" text-anchor="end">-138.<tspan dx="1.92">0000</tspan></text>
<text transform="translate(497.8,469.75) scale(0.881,1)" font-family="'Liberation Sans','Noto Sans CJK SC',sans-serif" font-size="6.9" fill="#262626" text-anchor="end">5.<tspan dx="1.92">0000</tspan></text>
<text transform="translate(532.1,469.75) scale(0.881,1)" font-family="'Liberation Sans','Noto Sans CJK SC',sans-serif" font-size="6.9" fill="#262626" text-anchor="end">7.<tspan dx="1.92">0000</tspan></text>
<polygon points="308.05,465.56 311.95,465.56 311.95,463.45 316.25,467.06 311.95,470.66 311.95,468.56 308.05,468.56" fill="#FFF400" stroke="#F60808" stroke-width="1.1" stroke-linejoin="miter"/>
<polygon points="355.35,471.16 355.35,467.46 353.45,467.46 356.85,463.16 360.25,467.46 358.35,467.46 358.35,471.16" fill="#FFF400" stroke="#F60808" stroke-width="1.1" stroke-linejoin="miter"/>
<text y="470" font-family="'Liberation Sans','Noto Sans CJK SC',sans-serif" font-size="6.7" fill="#000030" xml:space="preserve"><tspan x="536.4" textLength="16.6" lengthAdjust="spacingAndGlyphs">T2 - </tspan><tspan x="553.3">新</tspan><tspan x="560.05" textLength="3.08" lengthAdjust="spacingAndGlyphs"> </tspan><tspan x="563.43">钻头</tspan></text>
<rect x="172.3" y="472.31" width="27.5" height="9" fill="#A0A0A0"/>
<rect x="200.7" y="472.31" width="9.5" height="9" fill="#A4A4A4"/>
<rect x="211.1" y="472.31" width="9.7" height="9" fill="#F4F4F4"/>
<rect x="221.5" y="472.31" width="50.1" height="9" fill="#A0A0A0"/>
<rect x="272.4" y="472.31" width="34.2" height="9" fill="#E1EBFC"/>
<rect x="317.3" y="472.31" width="33.7" height="9" fill="#E1EBFC"/>
<rect x="361.5" y="472.31" width="33.7" height="9" fill="#E1EBFC"/>
<rect x="395.9" y="472.31" width="33.5" height="9" fill="#E1EBFC"/>
<rect x="430.1" y="472.31" width="33.9" height="9" fill="#E1EBFC"/>
<rect x="464.6" y="472.31" width="33.4" height="9" fill="#E1EBFC"/>
<rect x="498.6" y="472.31" width="33.7" height="9" fill="#E1EBFC"/>
<rect x="307.3" y="472.31" width="9.3" height="9" fill="#98A8A8"/>
<rect x="351.7" y="472.31" width="9.1" height="9" fill="#98A8A8"/>
<rect x="533" y="472.31" width="259.2" height="9" fill="#0202FC"/>
<rect x="793" y="472.31" width="208" height="9" fill="#A0A0A0"/>
<polygon points="174.3,480.81 176.56,479.97 180.92,473.86 178.72,472.29 174.36,478.4" fill="#0C0C0C"/>
<polygon points="176.13,479.54 179.33,475.06 178.11,474.19 174.91,478.66" fill="#F6EC20"/>
<polygon points="179.54,474.84 180.3,473.79 178.99,472.86 178.24,473.91" fill="#A81818"/>
<text x="181.8" y="479.91" font-family="'Liberation Sans','Noto Sans CJK SC',sans-serif" font-size="6.9" fill="#1C1C1C" textLength="3.38" lengthAdjust="spacingAndGlyphs">3</text>
<polygon points="204.2,475.91 207.2,472.81 210.1,472.81 210.1,475.31 207,479.11 204.4,478.91" fill="#14C8D0"/>
<path d="M205.2,477.71 l3.2,-3.4 M206.6,478.31 l3.2,-3.4 M206.2,474.51 l2.6,2.4" fill="none" stroke="#0A7880" stroke-width="0.45"/>
<line x1="201.9" y1="480.81" x2="205.4" y2="477.31" stroke="#0C0C0C" stroke-width="1.2"/>
<circle cx="216.1" cy="476.91" r="3.7" fill="#FFFFFF" stroke="#202020" stroke-width="0.7"/>
<text x="222" y="479.61" font-family="'Liberation Sans','Noto Sans CJK SC',sans-serif" font-size="6.7" fill="#141414" xml:space="preserve">圆加工</text>
<text transform="translate(306.4,479.51) scale(0.881,1)" font-family="'Liberation Sans','Noto Sans CJK SC',sans-serif" font-size="6.9" fill="#262626" text-anchor="end">42.<tspan dx="1.92">0000</tspan></text>
<text transform="translate(350.8,479.51) scale(0.881,1)" font-family="'Liberation Sans','Noto Sans CJK SC',sans-serif" font-size="6.9" fill="#262626" text-anchor="end">45.<tspan dx="1.92">0000</tspan></text>
<text transform="translate(395,479.51) scale(0.881,1)" font-family="'Liberation Sans','Noto Sans CJK SC',sans-serif" font-size="6.9" fill="#262626" text-anchor="end">71.<tspan dx="1.92">0000</tspan></text>
<text transform="translate(429.2,479.51) scale(0.881,1)" font-family="'Liberation Sans','Noto Sans CJK SC',sans-serif" font-size="6.9" fill="#262626" text-anchor="end">15.<tspan dx="1.92">0000</tspan></text>
<text transform="translate(463.8,479.51) scale(0.881,1)" font-family="'Liberation Sans','Noto Sans CJK SC',sans-serif" font-size="6.9" fill="#262626" text-anchor="end">177.<tspan dx="1.92">0000</tspan></text>
<text transform="translate(497.8,479.51) scale(0.881,1)" font-family="'Liberation Sans','Noto Sans CJK SC',sans-serif" font-size="6.9" fill="#262626" text-anchor="end">5.<tspan dx="1.92">0000</tspan></text>
<text transform="translate(532.1,479.51) scale(0.881,1)" font-family="'Liberation Sans','Noto Sans CJK SC',sans-serif" font-size="6.9" fill="#262626" text-anchor="end">7.<tspan dx="1.92">0000</tspan></text>
<polygon points="308.05,475.31 311.95,475.31 311.95,473.21 316.25,476.81 311.95,480.41 311.95,478.31 308.05,478.31" fill="#FFF400" stroke="#F60808" stroke-width="1.1" stroke-linejoin="miter"/>
<polygon points="355.35,480.91 355.35,477.21 353.45,477.21 356.85,472.91 360.25,477.21 358.35,477.21 358.35,480.91" fill="#FFF400" stroke="#F60808" stroke-width="1.1" stroke-linejoin="miter"/>
<text y="479.76" font-family="'Liberation Sans','Noto Sans CJK SC',sans-serif" font-size="6.7" fill="#000030" xml:space="preserve"><tspan x="536.4" textLength="16.6" lengthAdjust="spacingAndGlyphs">T2 - </tspan><tspan x="553.3">新</tspan><tspan x="560.05" textLength="3.08" lengthAdjust="spacingAndGlyphs"> </tspan><tspan x="563.43">钻头</tspan></text>
<rect x="172.3" y="482.06" width="27.5" height="9" fill="#A0A0A0"/>
<rect x="200.7" y="482.06" width="9.5" height="9" fill="#A4A4A4"/>
<rect x="211.1" y="482.06" width="9.7" height="9" fill="#F4F4F4"/>
<rect x="221.5" y="482.06" width="50.1" height="9" fill="#A0A0A0"/>
<rect x="272.4" y="482.06" width="34.2" height="9" fill="#ECF9F0"/>
<rect x="317.3" y="482.06" width="33.7" height="9" fill="#ECF9F0"/>
<rect x="361.5" y="482.06" width="33.7" height="9" fill="#ECF9F0"/>
<rect x="395.9" y="482.06" width="33.5" height="9" fill="#ECF9F0"/>
<rect x="430.1" y="482.06" width="33.9" height="9" fill="#ECF9F0"/>
<rect x="464.6" y="482.06" width="33.4" height="9" fill="#ECF9F0"/>
<rect x="498.6" y="482.06" width="33.7" height="9" fill="#ECF9F0"/>
<rect x="307.3" y="482.06" width="9.3" height="9" fill="#98A8A8"/>
<rect x="351.7" y="482.06" width="9.1" height="9" fill="#98A8A8"/>
<rect x="533" y="482.06" width="259.2" height="9" fill="#048204"/>
<rect x="793" y="482.06" width="208" height="9" fill="#A0A0A0"/>
<polygon points="174.3,490.56 176.56,489.72 180.92,483.62 178.72,482.05 174.36,488.15" fill="#0C0C0C"/>
<polygon points="176.13,489.29 179.33,484.81 178.11,483.94 174.91,488.42" fill="#F6EC20"/>
<polygon points="179.54,484.6 180.3,483.54 178.99,482.61 178.24,483.67" fill="#A81818"/>
<text x="181.8" y="489.66" font-family="'Liberation Sans','Noto Sans CJK SC',sans-serif" font-size="6.9" fill="#1C1C1C" textLength="3.38" lengthAdjust="spacingAndGlyphs">4</text>
<polygon points="204.2,485.67 207.2,482.56 210.1,482.56 210.1,485.06 207,488.87 204.4,488.67" fill="#14C8D0"/>
<path d="M205.2,487.46 l3.2,-3.4 M206.6,488.06 l3.2,-3.4 M206.2,484.26 l2.6,2.4" fill="none" stroke="#0A7880" stroke-width="0.45"/>
<line x1="201.9" y1="490.56" x2="205.4" y2="487.06" stroke="#0C0C0C" stroke-width="1.2"/>
<rect x="213.5" y="483.46" width="5.6" height="6.8" fill="#FFFFFF" stroke="#606060" stroke-width="0.6"/>
<path d="M214.5,487.26 q0.4,-3.2 3.2,-1.6" fill="none" stroke="#F01818" stroke-width="0.8"/>
<text x="215.3" y="489.87" font-family="'Liberation Sans','Noto Sans CJK SC',sans-serif" font-size="5.4" fill="#1010E0" font-weight="bold">P</text>
<text x="222" y="489.37" font-family="'Liberation Sans','Noto Sans CJK SC',sans-serif" font-size="6.7" fill="#141414" xml:space="preserve">盘铣加工</text>
<text transform="translate(306.4,489.26) scale(0.881,1)" font-family="'Liberation Sans','Noto Sans CJK SC',sans-serif" font-size="6.9" fill="#262626" text-anchor="end">40.<tspan dx="1.92">0000</tspan></text>
<text transform="translate(350.8,489.26) scale(0.881,1)" font-family="'Liberation Sans','Noto Sans CJK SC',sans-serif" font-size="6.9" fill="#262626" text-anchor="end">0.<tspan dx="1.92">0000</tspan></text>
<text transform="translate(395,489.26) scale(0.881,1)" font-family="'Liberation Sans','Noto Sans CJK SC',sans-serif" font-size="6.9" fill="#262626" text-anchor="end">78.<tspan dx="1.92">0000</tspan></text>
<text transform="translate(429.2,489.26) scale(0.881,1)" font-family="'Liberation Sans','Noto Sans CJK SC',sans-serif" font-size="6.9" fill="#262626" text-anchor="end">-77.<tspan dx="1.92">0000</tspan></text>
<text transform="translate(463.8,489.26) scale(0.881,1)" font-family="'Liberation Sans','Noto Sans CJK SC',sans-serif" font-size="6.9" fill="#262626" text-anchor="end">97.<tspan dx="1.92">0000</tspan></text>
<text transform="translate(497.8,489.26) scale(0.881,1)" font-family="'Liberation Sans','Noto Sans CJK SC',sans-serif" font-size="6.9" fill="#262626" text-anchor="end">5.<tspan dx="1.92">0000</tspan></text>
<text transform="translate(532.1,489.26) scale(0.881,1)" font-family="'Liberation Sans','Noto Sans CJK SC',sans-serif" font-size="6.9" fill="#262626" text-anchor="end">4.<tspan dx="1.92">0000</tspan></text>
<polygon points="308.05,485.06 311.95,485.06 311.95,482.96 316.25,486.56 311.95,490.17 311.95,488.06 308.05,488.06" fill="#FFF400" stroke="#F60808" stroke-width="1.1" stroke-linejoin="miter"/>
<polygon points="355.35,490.67 355.35,486.97 353.45,486.97 356.85,482.67 360.25,486.97 358.35,486.97 358.35,490.67" fill="#FFF400" stroke="#F60808" stroke-width="1.1" stroke-linejoin="miter"/>
<text y="489.51" font-family="'Liberation Sans','Noto Sans CJK SC',sans-serif" font-size="6.7" fill="#0A0A0A" xml:space="preserve"><tspan x="536.4" textLength="36.88" lengthAdjust="spacingAndGlyphs">T9 - 350mm </tspan><tspan x="573.58">铣盘</tspan></text>
<rect x="172.3" y="491.82" width="27.5" height="9" fill="#A0A0A0"/>
<rect x="200.7" y="491.82" width="9.5" height="9" fill="#A4A4A4"/>
<rect x="211.1" y="491.82" width="9.7" height="9" fill="#F4F4F4"/>
<rect x="221.5" y="491.82" width="50.1" height="9" fill="#A0A0A0"/>
<rect x="272.4" y="491.82" width="34.2" height="9" fill="#E1EBFC"/>
<rect x="317.3" y="491.82" width="33.7" height="9" fill="#E1EBFC"/>
<rect x="361.5" y="491.82" width="33.7" height="9" fill="#E1EBFC"/>
<rect x="395.9" y="491.82" width="33.5" height="9" fill="#E1EBFC"/>
<rect x="430.1" y="491.82" width="33.9" height="9" fill="#E1EBFC"/>
<rect x="464.6" y="491.82" width="33.4" height="9" fill="#E1EBFC"/>
<rect x="498.6" y="491.82" width="33.7" height="9" fill="#E1EBFC"/>
<rect x="307.3" y="491.82" width="9.3" height="9" fill="#98A8A8"/>
<rect x="351.7" y="491.82" width="9.1" height="9" fill="#98A8A8"/>
<rect x="533" y="491.82" width="259.2" height="9" fill="#A0A0A0"/>
<rect x="793" y="491.82" width="208" height="9" fill="#A0A0A0"/>
<polygon points="174.3,500.32 176.56,499.48 180.92,493.37 178.72,491.8 174.36,497.91" fill="#0C0C0C"/>
<polygon points="176.13,499.05 179.33,494.57 178.11,493.7 174.91,498.17" fill="#F6EC20"/>
<polygon points="179.54,494.35 180.3,493.3 178.99,492.37 178.24,493.42" fill="#A81818"/>
<text x="181.8" y="499.42" font-family="'Liberation Sans','Noto Sans CJK SC',sans-serif" font-size="6.9" fill="#1C1C1C" textLength="3.38" lengthAdjust="spacingAndGlyphs">5</text>
<polygon points="204.2,495.42 207.2,492.32 210.1,492.32 210.1,494.82 207,498.62 204.4,498.42" fill="#14C8D0"/>
<path d="M205.2,497.22 l3.2,-3.4 M206.6,497.82 l3.2,-3.4 M206.2,494.02 l2.6,2.4" fill="none" stroke="#0A7880" stroke-width="0.45"/>
<line x1="201.9" y1="500.32" x2="205.4" y2="496.82" stroke="#0C0C0C" stroke-width="1.2"/>
<circle cx="216.1" cy="496.42" r="3.7" fill="#FFFFFF" stroke="#202020" stroke-width="0.7"/>
<text x="222" y="499.12" font-family="'Liberation Sans','Noto Sans CJK SC',sans-serif" font-size="6.7" fill="#141414" xml:space="preserve">圆加工</text>
<text transform="translate(306.4,499.02) scale(0.881,1)" font-family="'Liberation Sans','Noto Sans CJK SC',sans-serif" font-size="6.9" fill="#262626" text-anchor="end">26.<tspan dx="1.92">0000</tspan></text>
<text transform="translate(350.8,499.02) scale(0.881,1)" font-family="'Liberation Sans','Noto Sans CJK SC',sans-serif" font-size="6.9" fill="#262626" text-anchor="end">57.<tspan dx="1.92">0000</tspan></text>
<text transform="translate(395,499.02) scale(0.881,1)" font-family="'Liberation Sans','Noto Sans CJK SC',sans-serif" font-size="6.9" fill="#262626" text-anchor="end">60.<tspan dx="1.92">0000</tspan></text>
<text transform="translate(429.2,499.02) scale(0.881,1)" font-family="'Liberation Sans','Noto Sans CJK SC',sans-serif" font-size="6.9" fill="#262626" text-anchor="end">72.<tspan dx="1.92">0000</tspan></text>
<text transform="translate(463.8,499.02) scale(0.881,1)" font-family="'Liberation Sans','Noto Sans CJK SC',sans-serif" font-size="6.9" fill="#262626" text-anchor="end">-180.<tspan dx="1.92">0000</tspan></text>
<text transform="translate(497.8,499.02) scale(0.881,1)" font-family="'Liberation Sans','Noto Sans CJK SC',sans-serif" font-size="6.9" fill="#262626" text-anchor="end">5.<tspan dx="1.92">0000</tspan></text>
<text transform="translate(532.1,499.02) scale(0.881,1)" font-family="'Liberation Sans','Noto Sans CJK SC',sans-serif" font-size="6.9" fill="#262626" text-anchor="end">10.<tspan dx="1.92">0000</tspan></text>
<polygon points="308.05,494.82 311.95,494.82 311.95,492.72 316.25,496.32 311.95,499.92 311.95,497.82 308.05,497.82" fill="#FFF400" stroke="#F60808" stroke-width="1.1" stroke-linejoin="miter"/>
<polygon points="355.35,492.42 355.35,496.12 353.45,496.12 356.85,500.42 360.25,496.12 358.35,496.12 358.35,492.42" fill="#FFF400" stroke="#F60808" stroke-width="1.1" stroke-linejoin="miter"/>
<text y="499.27" font-family="'Liberation Sans','Noto Sans CJK SC',sans-serif" font-size="6.7" fill="#0A0A0A" xml:space="preserve"><tspan x="536.4" textLength="30.12" lengthAdjust="spacingAndGlyphs">T3 - 5mm </tspan><tspan x="566.82">钻头</tspan></text>
<rect x="172.3" y="501.58" width="27.5" height="9" fill="#A0A0A0"/>
<rect x="200.7" y="501.58" width="9.5" height="9" fill="#A4A4A4"/>
<rect x="211.1" y="501.58" width="9.7" height="9" fill="#F4F4F4"/>
<rect x="221.5" y="501.58" width="50.1" height="9" fill="#A0A0A0"/>
<rect x="272.4" y="501.58" width="34.2" height="9" fill="#ECF9F0"/>
<rect x="317.3" y="501.58" width="33.7" height="9" fill="#ECF9F0"/>
<rect x="361.5" y="501.58" width="33.7" height="9" fill="#ECF9F0"/>
<rect x="395.9" y="501.58" width="33.5" height="9" fill="#ECF9F0"/>
<rect x="430.1" y="501.58" width="33.9" height="9" fill="#ECF9F0"/>
<rect x="464.6" y="501.58" width="33.4" height="9" fill="#ECF9F0"/>
<rect x="498.6" y="501.58" width="33.7" height="9" fill="#ECF9F0"/>
<rect x="307.3" y="501.58" width="9.3" height="9" fill="#98A8A8"/>
<rect x="351.7" y="501.58" width="9.1" height="9" fill="#98A8A8"/>
<rect x="533" y="501.58" width="259.2" height="9" fill="#A0A0A0"/>
<rect x="793" y="501.58" width="208" height="9" fill="#A0A0A0"/>
<polygon points="174.3,510.08 176.56,509.23 180.92,503.13 178.72,501.56 174.36,507.66" fill="#0C0C0C"/>
<polygon points="176.13,508.8 179.33,504.32 178.11,503.45 174.91,507.93" fill="#F6EC20"/>
<polygon points="179.54,504.11 180.3,503.05 178.99,502.12 178.24,503.18" fill="#A81818"/>
<text x="181.8" y="509.18" font-family="'Liberation Sans','Noto Sans CJK SC',sans-serif" font-size="6.9" fill="#1C1C1C" textLength="3.38" lengthAdjust="spacingAndGlyphs">6</text>
<polygon points="204.2,505.18 207.2,502.08 210.1,502.08 210.1,504.58 207,508.38 204.4,508.18" fill="#14C8D0"/>
<path d="M205.2,506.98 l3.2,-3.4 M206.6,507.58 l3.2,-3.4 M206.2,503.78 l2.6,2.4" fill="none" stroke="#0A7880" stroke-width="0.45"/>
<line x1="201.9" y1="510.08" x2="205.4" y2="506.58" stroke="#0C0C0C" stroke-width="1.2"/>
<circle cx="216.1" cy="506.18" r="3.7" fill="#FFFFFF" stroke="#202020" stroke-width="0.7"/>
<text x="222" y="508.88" font-family="'Liberation Sans','Noto Sans CJK SC',sans-serif" font-size="6.7" fill="#141414" xml:space="preserve">圆加工</text>
<text transform="translate(306.4,508.78) scale(0.881,1)" font-family="'Liberation Sans','Noto Sans CJK SC',sans-serif" font-size="6.9" fill="#262626" text-anchor="end">24.<tspan dx="1.92">0000</tspan></text>
<text transform="translate(350.8,508.78) scale(0.881,1)" font-family="'Liberation Sans','Noto Sans CJK SC',sans-serif" font-size="6.9" fill="#262626" text-anchor="end">54.<tspan dx="1.92">0000</tspan></text>
<text transform="translate(395,508.78) scale(0.881,1)" font-family="'Liberation Sans','Noto Sans CJK SC',sans-serif" font-size="6.9" fill="#262626" text-anchor="end">53.<tspan dx="1.92">0000</tspan></text>
<text transform="translate(429.2,508.78) scale(0.881,1)" font-family="'Liberation Sans','Noto Sans CJK SC',sans-serif" font-size="6.9" fill="#262626" text-anchor="end">72.<tspan dx="1.92">0000</tspan></text>
<text transform="translate(463.8,508.78) scale(0.881,1)" font-family="'Liberation Sans','Noto Sans CJK SC',sans-serif" font-size="6.9" fill="#262626" text-anchor="end">-180.<tspan dx="1.92">0000</tspan></text>
<text transform="translate(497.8,508.78) scale(0.881,1)" font-family="'Liberation Sans','Noto Sans CJK SC',sans-serif" font-size="6.9" fill="#262626" text-anchor="end">5.<tspan dx="1.92">0000</tspan></text>
<text transform="translate(532.1,508.78) scale(0.881,1)" font-family="'Liberation Sans','Noto Sans CJK SC',sans-serif" font-size="6.9" fill="#262626" text-anchor="end">9.<tspan dx="1.92">0000</tspan></text>
<polygon points="308.05,504.58 311.95,504.58 311.95,502.48 316.25,506.08 311.95,509.68 311.95,507.58 308.05,507.58" fill="#FFF400" stroke="#F60808" stroke-width="1.1" stroke-linejoin="miter"/>
<polygon points="355.35,502.18 355.35,505.88 353.45,505.88 356.85,510.18 360.25,505.88 358.35,505.88 358.35,502.18" fill="#FFF400" stroke="#F60808" stroke-width="1.1" stroke-linejoin="miter"/>
<text y="509.03" font-family="'Liberation Sans','Noto Sans CJK SC',sans-serif" font-size="6.7" fill="#0A0A0A" xml:space="preserve"><tspan x="536.4" textLength="30.12" lengthAdjust="spacingAndGlyphs">T3 - 5mm </tspan><tspan x="566.82">钻头</tspan></text>
<rect x="172.3" y="511.33" width="27.5" height="9" fill="#A0A0A0"/>
<rect x="200.7" y="511.33" width="9.5" height="9" fill="#A4A4A4"/>
<rect x="211.1" y="511.33" width="9.7" height="9" fill="#F4F4F4"/>
<rect x="221.5" y="511.33" width="50.1" height="9" fill="#A0A0A0"/>
<rect x="272.4" y="511.33" width="34.2" height="9" fill="#E1EBFC"/>
<rect x="317.3" y="511.33" width="33.7" height="9" fill="#E1EBFC"/>
<rect x="361.5" y="511.33" width="33.7" height="9" fill="#E1EBFC"/>
<rect x="395.9" y="511.33" width="33.5" height="9" fill="#E1EBFC"/>
<rect x="430.1" y="511.33" width="33.9" height="9" fill="#E1EBFC"/>
<rect x="464.6" y="511.33" width="33.4" height="9" fill="#E1EBFC"/>
<rect x="498.6" y="511.33" width="33.7" height="9" fill="#E1EBFC"/>
<rect x="307.3" y="511.33" width="9.3" height="9" fill="#98A8A8"/>
<rect x="351.7" y="511.33" width="9.1" height="9" fill="#98A8A8"/>
<rect x="533" y="511.33" width="259.2" height="9" fill="#0202FC"/>
<rect x="793" y="511.33" width="208" height="9" fill="#A0A0A0"/>
<polygon points="174.3,519.83 176.56,518.99 180.92,512.88 178.72,511.31 174.36,517.42" fill="#0C0C0C"/>
<polygon points="176.13,518.56 179.33,514.08 178.11,513.21 174.91,517.68" fill="#F6EC20"/>
<polygon points="179.54,513.86 180.3,512.81 178.99,511.88 178.24,512.93" fill="#A81818"/>
<text x="181.8" y="518.93" font-family="'Liberation Sans','Noto Sans CJK SC',sans-serif" font-size="6.9" fill="#1C1C1C" textLength="3.38" lengthAdjust="spacingAndGlyphs">7</text>
<polygon points="204.2,514.93 207.2,511.83 210.1,511.83 210.1,514.33 207,518.13 204.4,517.93" fill="#14C8D0"/>
<path d="M205.2,516.73 l3.2,-3.4 M206.6,517.33 l3.2,-3.4 M206.2,513.53 l2.6,2.4" fill="none" stroke="#0A7880" stroke-width="0.45"/>
<line x1="201.9" y1="519.83" x2="205.4" y2="516.33" stroke="#0C0C0C" stroke-width="1.2"/>
<circle cx="216.1" cy="515.93" r="3.2" fill="#FFFFFF" stroke="#404040" stroke-width="0.6"/>
<circle cx="216.1" cy="515.93" r="1.7" fill="none" stroke="#F01818" stroke-width="0.7"/>
<line x1="211.7" y1="515.93" x2="220.5" y2="515.93" stroke="#F01818" stroke-width="0.6"/>
<line x1="216.1" y1="511.53" x2="216.1" y2="520.33" stroke="#F01818" stroke-width="0.6"/>
<text x="222" y="518.63" font-family="'Liberation Sans','Noto Sans CJK SC',sans-serif" font-size="6.7" fill="#141414" xml:space="preserve">攻丝加工</text>
<text transform="translate(306.4,518.53) scale(0.881,1)" font-family="'Liberation Sans','Noto Sans CJK SC',sans-serif" font-size="6.9" fill="#262626" text-anchor="end">26.<tspan dx="1.92">0000</tspan></text>
<text transform="translate(350.8,518.53) scale(0.881,1)" font-family="'Liberation Sans','Noto Sans CJK SC',sans-serif" font-size="6.9" fill="#262626" text-anchor="end">57.<tspan dx="1.92">0000</tspan></text>
<text transform="translate(395,518.53) scale(0.881,1)" font-family="'Liberation Sans','Noto Sans CJK SC',sans-serif" font-size="6.9" fill="#262626" text-anchor="end">60.<tspan dx="1.92">0000</tspan></text>
<text transform="translate(429.2,518.53) scale(0.881,1)" font-family="'Liberation Sans','Noto Sans CJK SC',sans-serif" font-size="6.9" fill="#262626" text-anchor="end">72.<tspan dx="1.92">0000</tspan></text>
<text transform="translate(463.8,518.53) scale(0.881,1)" font-family="'Liberation Sans','Noto Sans CJK SC',sans-serif" font-size="6.9" fill="#262626" text-anchor="end">-180.<tspan dx="1.92">0000</tspan></text>
<text transform="translate(497.8,518.53) scale(0.881,1)" font-family="'Liberation Sans','Noto Sans CJK SC',sans-serif" font-size="6.9" fill="#262626" text-anchor="end">5.<tspan dx="1.92">0000</tspan></text>
<text transform="translate(532.1,518.53) scale(0.881,1)" font-family="'Liberation Sans','Noto Sans CJK SC',sans-serif" font-size="6.9" fill="#262626" text-anchor="end">8.<tspan dx="1.92">0000</tspan></text>
<polygon points="308.05,514.33 311.95,514.33 311.95,512.23 316.25,515.83 311.95,519.43 311.95,517.33 308.05,517.33" fill="#FFF400" stroke="#F60808" stroke-width="1.1" stroke-linejoin="miter"/>
<polygon points="355.35,511.93 355.35,515.63 353.45,515.63 356.85,519.93 360.25,515.63 358.35,515.63 358.35,511.93" fill="#FFF400" stroke="#F60808" stroke-width="1.1" stroke-linejoin="miter"/>
<text y="518.78" font-family="'Liberation Sans','Noto Sans CJK SC',sans-serif" font-size="6.7" fill="#000030" xml:space="preserve"><tspan x="536.4" textLength="30.12" lengthAdjust="spacingAndGlyphs">T4 - 6mm </tspan><tspan x="566.82">丝锥</tspan></text>
<rect x="172.3" y="521.09" width="27.5" height="9" fill="#A0A0A0"/>
<rect x="200.7" y="521.09" width="9.5" height="9" fill="#A4A4A4"/>
<rect x="211.1" y="521.09" width="9.7" height="9" fill="#F4F4F4"/>
<rect x="221.5" y="521.09" width="50.1" height="9" fill="#A0A0A0"/>
<rect x="272.4" y="521.09" width="34.2" height="9" fill="#ECF9F0"/>
<rect x="317.3" y="521.09" width="33.7" height="9" fill="#ECF9F0"/>
<rect x="361.5" y="521.09" width="33.7" height="9" fill="#ECF9F0"/>
<rect x="395.9" y="521.09" width="33.5" height="9" fill="#ECF9F0"/>
<rect x="430.1" y="521.09" width="33.9" height="9" fill="#ECF9F0"/>
<rect x="464.6" y="521.09" width="33.4" height="9" fill="#ECF9F0"/>
<rect x="498.6" y="521.09" width="33.7" height="9" fill="#ECF9F0"/>
<rect x="307.3" y="521.09" width="9.3" height="9" fill="#98A8A8"/>
<rect x="351.7" y="521.09" width="9.1" height="9" fill="#98A8A8"/>
<rect x="533" y="521.09" width="259.2" height="9" fill="#0202FC"/>
<rect x="793" y="521.09" width="208" height="9" fill="#A0A0A0"/>
<polygon points="174.3,529.59 176.56,528.74 180.92,522.64 178.72,521.07 174.36,527.17" fill="#0C0C0C"/>
<polygon points="176.13,528.31 179.33,523.83 178.11,522.96 174.91,527.44" fill="#F6EC20"/>
<polygon points="179.54,523.62 180.3,522.56 178.99,521.63 178.24,522.69" fill="#A81818"/>
<text x="181.8" y="528.69" font-family="'Liberation Sans','Noto Sans CJK SC',sans-serif" font-size="6.9" fill="#1C1C1C" textLength="3.38" lengthAdjust="spacingAndGlyphs">8</text>
<polygon points="204.2,524.69 207.2,521.59 210.1,521.59 210.1,524.09 207,527.88 204.4,527.69" fill="#14C8D0"/>
<path d="M205.2,526.49 l3.2,-3.4 M206.6,527.09 l3.2,-3.4 M206.2,523.29 l2.6,2.4" fill="none" stroke="#0A7880" stroke-width="0.45"/>
<line x1="201.9" y1="529.59" x2="205.4" y2="526.09" stroke="#0C0C0C" stroke-width="1.2"/>
<circle cx="216.1" cy="525.69" r="3.2" fill="#FFFFFF" stroke="#404040" stroke-width="0.6"/>
<circle cx="216.1" cy="525.69" r="1.7" fill="none" stroke="#F01818" stroke-width="0.7"/>
<line x1="211.7" y1="525.69" x2="220.5" y2="525.69" stroke="#F01818" stroke-width="0.6"/>
<line x1="216.1" y1="521.29" x2="216.1" y2="530.09" stroke="#F01818" stroke-width="0.6"/>
<text x="222" y="528.39" font-family="'Liberation Sans','Noto Sans CJK SC',sans-serif" font-size="6.7" fill="#141414" xml:space="preserve">攻丝加工</text>
<text transform="translate(306.4,528.29) scale(0.881,1)" font-family="'Liberation Sans','Noto Sans CJK SC',sans-serif" font-size="6.9" fill="#262626" text-anchor="end">24.<tspan dx="1.92">0000</tspan></text>
<text transform="translate(350.8,528.29) scale(0.881,1)" font-family="'Liberation Sans','Noto Sans CJK SC',sans-serif" font-size="6.9" fill="#262626" text-anchor="end">54.<tspan dx="1.92">0000</tspan></text>
<text transform="translate(395,528.29) scale(0.881,1)" font-family="'Liberation Sans','Noto Sans CJK SC',sans-serif" font-size="6.9" fill="#262626" text-anchor="end">53.<tspan dx="1.92">0000</tspan></text>
<text transform="translate(429.2,528.29) scale(0.881,1)" font-family="'Liberation Sans','Noto Sans CJK SC',sans-serif" font-size="6.9" fill="#262626" text-anchor="end">72.<tspan dx="1.92">0000</tspan></text>
<text transform="translate(463.8,528.29) scale(0.881,1)" font-family="'Liberation Sans','Noto Sans CJK SC',sans-serif" font-size="6.9" fill="#262626" text-anchor="end">-180.<tspan dx="1.92">0000</tspan></text>
<text transform="translate(497.8,528.29) scale(0.881,1)" font-family="'Liberation Sans','Noto Sans CJK SC',sans-serif" font-size="6.9" fill="#262626" text-anchor="end">5.<tspan dx="1.92">0000</tspan></text>
<text transform="translate(532.1,528.29) scale(0.881,1)" font-family="'Liberation Sans','Noto Sans CJK SC',sans-serif" font-size="6.9" fill="#262626" text-anchor="end">8.<tspan dx="1.92">0000</tspan></text>
<polygon points="308.05,524.09 311.95,524.09 311.95,521.99 316.25,525.59 311.95,529.19 311.95,527.09 308.05,527.09" fill="#FFF400" stroke="#F60808" stroke-width="1.1" stroke-linejoin="miter"/>
<polygon points="355.35,521.69 355.35,525.39 353.45,525.39 356.85,529.69 360.25,525.39 358.35,525.39 358.35,521.69" fill="#FFF400" stroke="#F60808" stroke-width="1.1" stroke-linejoin="miter"/>
<text y="528.54" font-family="'Liberation Sans','Noto Sans CJK SC',sans-serif" font-size="6.7" fill="#000030" xml:space="preserve"><tspan x="536.4" textLength="30.12" lengthAdjust="spacingAndGlyphs">T4 - 6mm </tspan><tspan x="566.82">丝锥</tspan></text>
<rect x="172.3" y="530.84" width="27.5" height="9" fill="#A0A0A0"/>
<rect x="200.7" y="530.84" width="9.5" height="9" fill="#A4A4A4"/>
<rect x="211.1" y="530.84" width="9.7" height="9" fill="#F4F4F4"/>
<rect x="221.5" y="530.84" width="50.1" height="9" fill="#A0A0A0"/>
<rect x="272.4" y="530.84" width="34.2" height="9" fill="#E1EBFC"/>
<rect x="317.3" y="530.84" width="33.7" height="9" fill="#E1EBFC"/>
<rect x="361.5" y="530.84" width="33.7" height="9" fill="#E1EBFC"/>
<rect x="395.9" y="530.84" width="33.5" height="9" fill="#E1EBFC"/>
<rect x="430.1" y="530.84" width="33.9" height="9" fill="#E1EBFC"/>
<rect x="464.6" y="530.84" width="33.4" height="9" fill="#E1EBFC"/>
<rect x="498.6" y="530.84" width="33.7" height="9" fill="#E1EBFC"/>
<rect x="307.3" y="530.84" width="9.3" height="9" fill="#98A8A8"/>
<rect x="351.7" y="530.84" width="9.1" height="9" fill="#98A8A8"/>
<rect x="533" y="530.84" width="259.2" height="9" fill="#0202FC"/>
<rect x="793" y="530.84" width="208" height="9" fill="#A0A0A0"/>
<polygon points="174.3,539.34 176.56,538.5 180.92,532.39 178.72,530.82 174.36,536.93" fill="#0C0C0C"/>
<polygon points="176.13,538.07 179.33,533.59 178.11,532.72 174.91,537.19" fill="#F6EC20"/>
<polygon points="179.54,533.37 180.3,532.32 178.99,531.39 178.24,532.44" fill="#A81818"/>
<text x="181.8" y="538.44" font-family="'Liberation Sans','Noto Sans CJK SC',sans-serif" font-size="6.9" fill="#1C1C1C" textLength="3.38" lengthAdjust="spacingAndGlyphs">9</text>
<polygon points="204.2,534.44 207.2,531.34 210.1,531.34 210.1,533.84 207,537.64 204.4,537.44" fill="#14C8D0"/>
<path d="M205.2,536.24 l3.2,-3.4 M206.6,536.84 l3.2,-3.4 M206.2,533.04 l2.6,2.4" fill="none" stroke="#0A7880" stroke-width="0.45"/>
<line x1="201.9" y1="539.34" x2="205.4" y2="535.84" stroke="#0C0C0C" stroke-width="1.2"/>
<line x1="213.1" y1="532.24" x2="219.1" y2="538.64" stroke="#202020" stroke-width="0.7"/>
<circle cx="216.7" cy="536.04" r="0.8" fill="#F01818"/>
<text x="222" y="538.14" font-family="'Liberation Sans','Noto Sans CJK SC',sans-serif" font-size="6.7" fill="#141414" xml:space="preserve">直线加工</text>
<text transform="translate(306.4,538.04) scale(0.881,1)" font-family="'Liberation Sans','Noto Sans CJK SC',sans-serif" font-size="6.9" fill="#262626" text-anchor="end">40.<tspan dx="1.92">5000</tspan></text>
<text transform="translate(350.8,538.04) scale(0.881,1)" font-family="'Liberation Sans','Noto Sans CJK SC',sans-serif" font-size="6.9" fill="#262626" text-anchor="end">86.<tspan dx="1.92">0000</tspan></text>
<text transform="translate(395,538.04) scale(0.881,1)" font-family="'Liberation Sans','Noto Sans CJK SC',sans-serif" font-size="6.9" fill="#262626" text-anchor="end">72.<tspan dx="1.92">0000</tspan></text>
<text transform="translate(429.2,538.04) scale(0.881,1)" font-family="'Liberation Sans','Noto Sans CJK SC',sans-serif" font-size="6.9" fill="#262626" text-anchor="end">18.<tspan dx="1.92">0000</tspan></text>
<text transform="translate(463.8,538.04) scale(0.881,1)" font-family="'Liberation Sans','Noto Sans CJK SC',sans-serif" font-size="6.9" fill="#262626" text-anchor="end">-65.<tspan dx="1.92">0000</tspan></text>
<text transform="translate(497.8,538.04) scale(0.881,1)" font-family="'Liberation Sans','Noto Sans CJK SC',sans-serif" font-size="6.9" fill="#262626" text-anchor="end">5.<tspan dx="1.92">0000</tspan></text>
<text transform="translate(532.1,538.04) scale(0.881,1)" font-family="'Liberation Sans','Noto Sans CJK SC',sans-serif" font-size="6.9" fill="#262626" text-anchor="end">7.<tspan dx="1.92">0000</tspan></text>
<polygon points="308.05,533.84 311.95,533.84 311.95,531.74 316.25,535.34 311.95,538.94 311.95,536.84 308.05,536.84" fill="#FFF400" stroke="#F60808" stroke-width="1.1" stroke-linejoin="miter"/>
<polygon points="355.35,539.44 355.35,535.74 353.45,535.74 356.85,531.44 360.25,535.74 358.35,535.74 358.35,539.44" fill="#FFF400" stroke="#F60808" stroke-width="1.1" stroke-linejoin="miter"/>
<text y="538.29" font-family="'Liberation Sans','Noto Sans CJK SC',sans-serif" font-size="6.7" fill="#000030" xml:space="preserve"><tspan x="536.4" textLength="26.74" lengthAdjust="spacingAndGlyphs">T1 - 6MM</tspan><tspan x="563.44">铣刀</tspan></text>
<rect x="172.3" y="540.6" width="27.5" height="9" fill="#A0A0A0"/>
<rect x="200.7" y="540.6" width="9.5" height="9" fill="#A4A4A4"/>
<rect x="211.1" y="540.6" width="9.7" height="9" fill="#F4F4F4"/>
<rect x="221.5" y="540.6" width="50.1" height="9" fill="#A0A0A0"/>
<rect x="272.4" y="540.6" width="34.2" height="9" fill="#ECF9F0"/>
<rect x="317.3" y="540.6" width="33.7" height="9" fill="#ECF9F0"/>
<rect x="361.5" y="540.6" width="33.7" height="9" fill="#ECF9F0"/>
<rect x="395.9" y="540.6" width="33.5" height="9" fill="#ECF9F0"/>
<rect x="430.1" y="540.6" width="33.9" height="9" fill="#ECF9F0"/>
<rect x="464.6" y="540.6" width="33.4" height="9" fill="#ECF9F0"/>
<rect x="498.6" y="540.6" width="33.7" height="9" fill="#ECF9F0"/>
<rect x="307.3" y="540.6" width="9.3" height="9" fill="#98A8A8"/>
<rect x="351.7" y="540.6" width="9.1" height="9" fill="#98A8A8"/>
<rect x="533" y="540.6" width="259.2" height="9" fill="#0202FC"/>
<rect x="793" y="540.6" width="208" height="9" fill="#A0A0A0"/>
<polygon points="174.3,549.1 176.56,548.25 180.92,542.15 178.72,540.58 174.36,546.68" fill="#0C0C0C"/>
<polygon points="176.13,547.82 179.33,543.34 178.11,542.47 174.91,546.95" fill="#F6EC20"/>
<polygon points="179.54,543.13 180.3,542.07 178.99,541.14 178.24,542.2" fill="#A81818"/>
<text x="181.8" y="548.2" font-family="'Liberation Sans','Noto Sans CJK SC',sans-serif" font-size="6.9" fill="#1C1C1C" textLength="6.76" lengthAdjust="spacingAndGlyphs">10</text>
<polygon points="204.2,544.2 207.2,541.1 210.1,541.1 210.1,543.6 207,547.39 204.4,547.2" fill="#14C8D0"/>
<path d="M205.2,546 l3.2,-3.4 M206.6,546.6 l3.2,-3.4 M206.2,542.8 l2.6,2.4" fill="none" stroke="#0A7880" stroke-width="0.45"/>
<line x1="201.9" y1="549.1" x2="205.4" y2="545.6" stroke="#0C0C0C" stroke-width="1.2"/>
<path d="M212.9,548 l0,-4 l6.4,0 l0,4" fill="none" stroke="#D01818" stroke-width="1.1"/>
<line x1="212.9" y1="546.6" x2="219.3" y2="546.6" stroke="#404040" stroke-width="0.6"/>
<text x="222" y="547.9" font-family="'Liberation Sans','Noto Sans CJK SC',sans-serif" font-size="6.7" fill="#141414" xml:space="preserve">V 线切削加工</text>
<text transform="translate(306.4,547.8) scale(0.881,1)" font-family="'Liberation Sans','Noto Sans CJK SC',sans-serif" font-size="6.9" fill="#262626" text-anchor="end">10.<tspan dx="1.92">0000</tspan></text>
<text transform="translate(350.8,547.8) scale(0.881,1)" font-family="'Liberation Sans','Noto Sans CJK SC',sans-serif" font-size="6.9" fill="#262626" text-anchor="end">3.<tspan dx="1.92">0000</tspan></text>
<text transform="translate(395,547.8) scale(0.881,1)" font-family="'Liberation Sans','Noto Sans CJK SC',sans-serif" font-size="6.9" fill="#262626" text-anchor="end">20.<tspan dx="1.92">0000</tspan></text>
<text transform="translate(429.2,547.8) scale(0.881,1)" font-family="'Liberation Sans','Noto Sans CJK SC',sans-serif" font-size="6.9" fill="#262626" text-anchor="end">72.<tspan dx="1.92">0000</tspan></text>
<text transform="translate(463.8,547.8) scale(0.881,1)" font-family="'Liberation Sans','Noto Sans CJK SC',sans-serif" font-size="6.9" fill="#262626" text-anchor="end">-180.<tspan dx="1.92">0000</tspan></text>
<text transform="translate(497.8,547.8) scale(0.881,1)" font-family="'Liberation Sans','Noto Sans CJK SC',sans-serif" font-size="6.9" fill="#262626" text-anchor="end">7.<tspan dx="1.92">0000</tspan></text>
<text transform="translate(532.1,547.8) scale(0.881,1)" font-family="'Liberation Sans','Noto Sans CJK SC',sans-serif" font-size="6.9" fill="#262626" text-anchor="end">10.<tspan dx="1.92">0000</tspan></text>
<polygon points="308.05,543.6 311.95,543.6 311.95,541.5 316.25,545.1 311.95,548.7 311.95,546.6 308.05,546.6" fill="#FFF400" stroke="#F60808" stroke-width="1.1" stroke-linejoin="miter"/>
<polygon points="355.35,541.2 355.35,544.9 353.45,544.9 356.85,549.2 360.25,544.9 358.35,544.9 358.35,541.2" fill="#FFF400" stroke="#F60808" stroke-width="1.1" stroke-linejoin="miter"/>
<text y="548.05" font-family="'Liberation Sans','Noto Sans CJK SC',sans-serif" font-size="6.7" fill="#000030" xml:space="preserve"><tspan x="536.4" textLength="26.74" lengthAdjust="spacingAndGlyphs">T1 - 6MM</tspan><tspan x="563.44">铣刀</tspan></text>
<rect x="172.3" y="550.35" width="27.5" height="9" fill="#A0A0A0"/>
<rect x="200.7" y="550.35" width="9.5" height="9" fill="#A4A4A4"/>
<rect x="211.1" y="550.35" width="9.7" height="9" fill="#F4F4F4"/>
<rect x="221.5" y="550.35" width="50.1" height="9" fill="#A0A0A0"/>
<rect x="272.4" y="550.35" width="34.2" height="9" fill="#E1EBFC"/>
<rect x="317.3" y="550.35" width="33.7" height="9" fill="#E1EBFC"/>
<rect x="361.5" y="550.35" width="33.7" height="9" fill="#E1EBFC"/>
<rect x="395.9" y="550.35" width="33.5" height="9" fill="#E1EBFC"/>
<rect x="430.1" y="550.35" width="33.9" height="9" fill="#E1EBFC"/>
<rect x="464.6" y="550.35" width="33.4" height="9" fill="#E1EBFC"/>
<rect x="498.6" y="550.35" width="33.7" height="9" fill="#E1EBFC"/>
<rect x="307.3" y="550.35" width="9.3" height="9" fill="#98A8A8"/>
<rect x="351.7" y="550.35" width="9.1" height="9" fill="#98A8A8"/>
<rect x="533" y="550.35" width="259.2" height="9" fill="#048204"/>
<rect x="793" y="550.35" width="208" height="9" fill="#A0A0A0"/>
<polygon points="174.3,558.85 176.56,558.01 180.92,551.9 178.72,550.33 174.36,556.44" fill="#0C0C0C"/>
<polygon points="176.13,557.58 179.33,553.1 178.11,552.23 174.91,556.7" fill="#F6EC20"/>
<polygon points="179.54,552.88 180.3,551.83 178.99,550.9 178.24,551.95" fill="#A81818"/>
<text x="181.8" y="557.95" font-family="'Liberation Sans','Noto Sans CJK SC',sans-serif" font-size="6.9" fill="#1C1C1C" textLength="6.76" lengthAdjust="spacingAndGlyphs">11</text>
<polygon points="204.2,553.95 207.2,550.85 210.1,550.85 210.1,553.35 207,557.15 204.4,556.95" fill="#14C8D0"/>
<path d="M205.2,555.75 l3.2,-3.4 M206.6,556.35 l3.2,-3.4 M206.2,552.55 l2.6,2.4" fill="none" stroke="#0A7880" stroke-width="0.45"/>
<line x1="201.9" y1="558.85" x2="205.4" y2="555.35" stroke="#0C0C0C" stroke-width="1.2"/>
<rect x="213.5" y="551.75" width="5.6" height="6.8" fill="#FFFFFF" stroke="#606060" stroke-width="0.6"/>
<path d="M214.5,555.55 q0.4,-3.2 3.2,-1.6" fill="none" stroke="#F01818" stroke-width="0.8"/>
<text x="215.3" y="558.15" font-family="'Liberation Sans','Noto Sans CJK SC',sans-serif" font-size="5.4" fill="#1010E0" font-weight="bold">P</text>
<text x="222" y="557.65" font-family="'Liberation Sans','Noto Sans CJK SC',sans-serif" font-size="6.7" fill="#141414" xml:space="preserve">盘铣加工</text>
<text transform="translate(306.4,557.55) scale(0.881,1)" font-family="'Liberation Sans','Noto Sans CJK SC',sans-serif" font-size="6.9" fill="#262626" text-anchor="end">60.<tspan dx="1.92">0000</tspan></text>
<text transform="translate(350.8,557.55) scale(0.881,1)" font-family="'Liberation Sans','Noto Sans CJK SC',sans-serif" font-size="6.9" fill="#262626" text-anchor="end">0.<tspan dx="1.92">0000</tspan></text>
<text transform="translate(395,557.55) scale(0.881,1)" font-family="'Liberation Sans','Noto Sans CJK SC',sans-serif" font-size="6.9" fill="#262626" text-anchor="end">78.<tspan dx="1.92">0000</tspan></text>
<text transform="translate(429.2,557.55) scale(0.881,1)" font-family="'Liberation Sans','Noto Sans CJK SC',sans-serif" font-size="6.9" fill="#262626" text-anchor="end">-77.<tspan dx="1.92">0000</tspan></text>
<text transform="translate(463.8,557.55) scale(0.881,1)" font-family="'Liberation Sans','Noto Sans CJK SC',sans-serif" font-size="6.9" fill="#262626" text-anchor="end">97.<tspan dx="1.92">0000</tspan></text>
<text transform="translate(497.8,557.55) scale(0.881,1)" font-family="'Liberation Sans','Noto Sans CJK SC',sans-serif" font-size="6.9" fill="#262626" text-anchor="end">5.<tspan dx="1.92">0000</tspan></text>
<text transform="translate(532.1,557.55) scale(0.881,1)" font-family="'Liberation Sans','Noto Sans CJK SC',sans-serif" font-size="6.9" fill="#262626" text-anchor="end">4.<tspan dx="1.92">0000</tspan></text>
<polygon points="308.05,553.35 311.95,553.35 311.95,551.25 316.25,554.85 311.95,558.45 311.95,556.35 308.05,556.35" fill="#FFF400" stroke="#F60808" stroke-width="1.1" stroke-linejoin="miter"/>
<polygon points="355.35,558.95 355.35,555.25 353.45,555.25 356.85,550.95 360.25,555.25 358.35,555.25 358.35,558.95" fill="#FFF400" stroke="#F60808" stroke-width="1.1" stroke-linejoin="miter"/>
<text y="557.8" font-family="'Liberation Sans','Noto Sans CJK SC',sans-serif" font-size="6.7" fill="#0A0A0A" xml:space="preserve"><tspan x="536.4" textLength="36.88" lengthAdjust="spacingAndGlyphs">T9 - 350mm </tspan><tspan x="573.58">铣盘</tspan></text>
<rect x="172.3" y="560.11" width="27.5" height="9" fill="#A0A0A0"/>
<rect x="200.7" y="560.11" width="9.5" height="9" fill="#C6C6C6"/>
<rect x="211.1" y="560.11" width="9.7" height="9" fill="#F4F4F4"/>
<rect x="221.5" y="560.11" width="50.1" height="9" fill="#A0A0A0"/>
<rect x="272.4" y="560.11" width="34.2" height="9" fill="#ECF9F0"/>
<rect x="317.3" y="560.11" width="33.7" height="9" fill="#ECF9F0"/>
<rect x="361.5" y="560.11" width="33.7" height="9" fill="#ECF9F0"/>
<rect x="395.9" y="560.11" width="33.5" height="9" fill="#ECF9F0"/>
<rect x="430.1" y="560.11" width="33.9" height="9" fill="#ECF9F0"/>
<rect x="464.6" y="560.11" width="33.4" height="9" fill="#ECF9F0"/>
<rect x="498.6" y="560.11" width="33.7" height="9" fill="#ECF9F0"/>
<rect x="307.3" y="560.11" width="9.3" height="9" fill="#C2C2C2"/>
<rect x="351.7" y="560.11" width="9.1" height="9" fill="#C2C2C2"/>
<rect x="533" y="560.11" width="259.2" height="9" fill="#A0A0A0"/>
<rect x="793" y="560.11" width="208" height="9" fill="#A0A0A0"/>
<polygon points="174.3,568.61 176.56,567.76 180.92,561.66 178.72,560.09 174.36,566.19" fill="#0C0C0C"/>
<polygon points="176.13,567.33 179.33,562.85 178.11,561.98 174.91,566.46" fill="#F6EC20"/>
<polygon points="179.54,562.64 180.3,561.58 178.99,560.65 178.24,561.71" fill="#A81818"/>
<text x="181.8" y="567.71" font-family="'Liberation Sans','Noto Sans CJK SC',sans-serif" font-size="6.9" fill="#1C1C1C" textLength="6.76" lengthAdjust="spacingAndGlyphs">12</text>
<line x1="212.9" y1="567" x2="220.7" y2="567" stroke="#1010E0" stroke-width="1.1"/>
<line x1="212.9" y1="564.71" x2="220.7" y2="564.71" stroke="#1010E0" stroke-width="0.6"/>
<line x1="214.3" y1="562.5" x2="214.3" y2="566.9" stroke="#1010E0" stroke-width="1.1"/>
<line x1="216.8" y1="562.5" x2="216.8" y2="566.9" stroke="#1010E0" stroke-width="1.1"/>
<line x1="219.3" y1="562.5" x2="219.3" y2="566.9" stroke="#1010E0" stroke-width="1.1"/>
<text x="222" y="567.41" font-family="'Liberation Sans','Noto Sans CJK SC',sans-serif" font-size="6.7" fill="#141414" xml:space="preserve">移动夹具</text>
<text x="306" y="566.31" font-family="'Liberation Sans','Noto Sans CJK SC',sans-serif" font-size="6" fill="#181818" text-anchor="end" textLength="20.6" lengthAdjust="spacingAndGlyphs" stroke="#181818" stroke-width="0.15">++++++</text>
<text x="350.4" y="566.31" font-family="'Liberation Sans','Noto Sans CJK SC',sans-serif" font-size="6" fill="#181818" text-anchor="end" textLength="20.6" lengthAdjust="spacingAndGlyphs" stroke="#181818" stroke-width="0.15">++++++</text>
<text x="394.6" y="566.31" font-family="'Liberation Sans','Noto Sans CJK SC',sans-serif" font-size="6" fill="#181818" text-anchor="end" textLength="20.6" lengthAdjust="spacingAndGlyphs" stroke="#181818" stroke-width="0.15">++++++</text>
<text x="428.8" y="566.31" font-family="'Liberation Sans','Noto Sans CJK SC',sans-serif" font-size="6" fill="#181818" text-anchor="end" textLength="20.6" lengthAdjust="spacingAndGlyphs" stroke="#181818" stroke-width="0.15">++++++</text>
<text x="463.4" y="566.31" font-family="'Liberation Sans','Noto Sans CJK SC',sans-serif" font-size="6" fill="#181818" text-anchor="end" textLength="20.6" lengthAdjust="spacingAndGlyphs" stroke="#181818" stroke-width="0.15">++++++</text>
<text x="497.4" y="566.31" font-family="'Liberation Sans','Noto Sans CJK SC',sans-serif" font-size="6" fill="#181818" text-anchor="end" textLength="20.6" lengthAdjust="spacingAndGlyphs" stroke="#181818" stroke-width="0.15">++++++</text>
<text x="531.7" y="566.31" font-family="'Liberation Sans','Noto Sans CJK SC',sans-serif" font-size="6" fill="#181818" text-anchor="end" textLength="20.6" lengthAdjust="spacingAndGlyphs" stroke="#181818" stroke-width="0.15">++++++</text>
<rect x="0" y="581.8" width="1001" height="4.2" fill="#F6F6F6"/>
<rect x="530" y="583.4" width="94" height="3" fill="#F4F4F4" stroke="#B4B4B4" stroke-width="0.7"/>
<rect x="626" y="583.4" width="71.7" height="3" fill="#F4F4F4" stroke="#B4B4B4" stroke-width="0.7"/>
<rect x="699" y="583.4" width="37" height="3" fill="#F4F4F4" stroke="#B4B4B4" stroke-width="0.7"/>
<rect x="737.7" y="583.4" width="36.3" height="3" fill="#F4F4F4" stroke="#B4B4B4" stroke-width="0.7"/>
<rect x="776" y="583.4" width="36.8" height="3" fill="#F4F4F4" stroke="#B4B4B4" stroke-width="0.7"/>
<rect x="815" y="583.4" width="37" height="3" fill="#F4F4F4" stroke="#B4B4B4" stroke-width="0.7"/>
<rect x="854" y="583.4" width="129" height="3" fill="#F4F4F4" stroke="#B4B4B4" stroke-width="0.7"/>
<rect x="984.5" y="583.4" width="18.5" height="3" fill="#F4F4F4" stroke="#B4B4B4" stroke-width="0.7"/>
</svg></body></html>
